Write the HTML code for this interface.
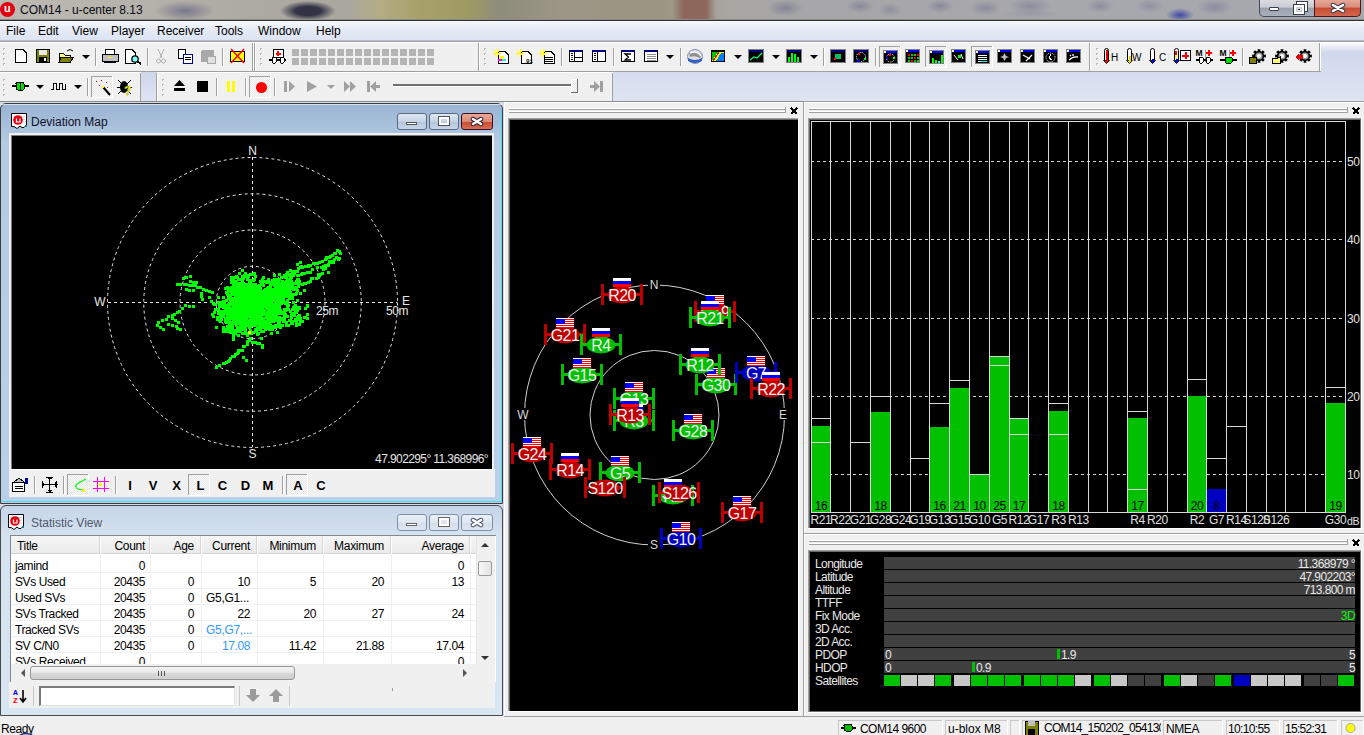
<!DOCTYPE html><html><head><meta charset="utf-8"><style>
*{margin:0;padding:0;box-sizing:border-box}
html,body{width:1364px;height:735px;overflow:hidden;background:#f0f0f0;font-family:"Liberation Sans",sans-serif;}
.ab{position:absolute}
.t{position:absolute;white-space:nowrap;line-height:1}
</style></head><body>
<div class="ab" style="left:0;top:0;width:1364px;height:735px;overflow:hidden">

<div class="ab" style="left:0px;top:0px;width:1364px;height:20px;background:radial-gradient(ellipse 18px 8px at 785px 8px,rgba(95,100,135,0.5),rgba(95,100,135,0)),radial-gradient(ellipse 14px 7px at 860px 6px,rgba(95,100,135,0.45),rgba(95,100,135,0)),radial-gradient(ellipse 12px 7px at 890px 10px,rgba(95,100,135,0.35),rgba(95,100,135,0)),radial-gradient(ellipse 14px 7px at 940px 6px,rgba(95,100,135,0.45),rgba(95,100,135,0)),radial-gradient(ellipse 16px 8px at 985px 8px,rgba(95,100,135,0.4),rgba(95,100,135,0)),radial-gradient(ellipse 22px 8px at 1030px 6px,rgba(95,100,135,0.4),rgba(95,100,135,0)),radial-gradient(ellipse 14px 7px at 1100px 6px,rgba(95,100,135,0.4),rgba(95,100,135,0)),radial-gradient(ellipse 14px 7px at 1150px 6px,rgba(95,100,135,0.35),rgba(95,100,135,0)),radial-gradient(ellipse 18px 8px at 1215px 7px,rgba(95,100,135,0.4),rgba(95,100,135,0)),radial-gradient(ellipse 30px 5px at 1030px 14px,rgba(95,100,135,0.2),rgba(95,100,135,0)),radial-gradient(ellipse 30px 10px at 185px 11px,rgba(100,100,130,.75),rgba(100,100,130,0)),radial-gradient(ellipse 28px 10px at 308px 11px,rgba(50,52,70,1) 45%,rgba(50,52,70,0)),linear-gradient(90deg,rgba(140,100,88,0) 672px,rgba(140,100,88,.95) 684px,rgba(140,100,88,.95) 706px,rgba(140,100,88,0) 716px),radial-gradient(ellipse 14px 7px at 1180px 15px,rgba(40,50,160,.8),rgba(40,50,160,0)),linear-gradient(90deg,#bcbab2 0px,#b4b2aa 140px,#aca9a1 270px,#aaa89e 350px,#b4ac84 380px,#a8a068 420px,#9e9a64 470px,#8e8c7c 500px,#9c9686 560px,#9a9682 660px,#a8a6a2 730px,#a6a6a8 800px,#a8a8ac 1000px,#a6a8ae 1264px)"></div>
<div class="ab" style="left:0px;top:19px;width:1364px;height:1px;background:#8a8a8a"></div>
<div class="ab" style="left:0px;top:20px;width:1364px;height:1px;background:#303030"></div>
<div class="ab" style="left:0px;top:2px;width:15px;height:15px;background:#e00010;border-radius:50%"></div>
<div class="t" style="left:4px;top:3px;font-size:11px;color:#fff;font-weight:bold">u</div>
<div class="t" style="left:20px;top:4px;font-size:12px;color:#0a0a14;">COM14 - u-center 8.13</div>
<div class="ab" style="left:1259px;top:0px;width:29px;height:17px;background:linear-gradient(#d9dbe0,#c8ccd4 45%,#9aa0ac 50%,#aab0bc);border:1px solid #444a58;border-top:none;border-radius:0 0 0 5px"></div>
<div class="ab" style="left:1278px;top:0px;width:0px;height:0px;"></div>
<div class="ab" style="left:1287px;top:0px;width:28px;height:17px;background:linear-gradient(#d9dbe0,#c8ccd4 45%,#9aa0ac 50%,#aab0bc);border:1px solid #444a58;border-top:none;border-left:none"></div>
<div class="ab" style="left:1314px;top:0px;width:47px;height:17px;background:linear-gradient(#e8a898,#d88a78 45%,#c84a30 50%,#d46850);border:1px solid #4a1a1a;border-top:none;border-radius:0 0 5px 0"></div>
<div class="ab" style="left:1269px;top:7px;width:10px;height:4px;background:#fff;border:1px solid #3a4050;border-radius:1px"></div>
<div class="ab" style="left:1297px;top:2px;width:10px;height:9px;border:2px solid #fff;outline:1px solid #3a4050"></div>
<div class="ab" style="left:1294px;top:5px;width:10px;height:9px;background:#cfd2da;border:2px solid #fff;outline:1px solid #3a4050"></div>
<div class="ab" style="left:1298px;top:9px;width:2px;height:1px;background:#3a4050"></div>
<svg class="ab" style="left:1330px;top:2px" width="16" height="12"><path d="M3 3 L13 9 M13 3 L3 9" stroke="#3a4050" stroke-width="4.5" stroke-linecap="round"/><path d="M3 3 L13 9 M13 3 L3 9" stroke="#fff" stroke-width="2.6" stroke-linecap="round"/></svg>
<div class="ab" style="left:0px;top:21px;width:1364px;height:20px;background:linear-gradient(#f6f8fc,#e6ebf6 40%,#dbe2f2)"></div>
<div class="ab" style="left:0px;top:40px;width:1364px;height:1px;background:#b9bdc8"></div>
<div class="t" style="left:6px;top:25px;font-size:12px;color:#000;">File</div>
<div class="t" style="left:38px;top:25px;font-size:12px;color:#000;">Edit</div>
<div class="t" style="left:72px;top:25px;font-size:12px;color:#000;">View</div>
<div class="t" style="left:111px;top:25px;font-size:12px;color:#000;">Player</div>
<div class="t" style="left:157px;top:25px;font-size:12px;color:#000;">Receiver</div>
<div class="t" style="left:215px;top:25px;font-size:12px;color:#000;">Tools</div>
<div class="t" style="left:258px;top:25px;font-size:12px;color:#000;">Window</div>
<div class="t" style="left:316px;top:25px;font-size:12px;color:#000;">Help</div>
<div class="ab" style="left:0px;top:41px;width:1364px;height:61px;background:#d3daea"></div>
<div class="ab" style="left:0px;top:41px;width:1364px;height:1px;background:#a0a0a0"></div>
<div class="ab" style="left:0px;top:42px;width:1320px;height:30px;background:#f0f0f0"></div>
<div class="ab" style="left:0px;top:71px;width:1364px;height:1px;background:#a5a5a5"></div>
<div class="ab" style="left:0px;top:72px;width:612px;height:29px;background:#f0f0f0"></div>
<div class="ab" style="left:0px;top:100px;width:1364px;height:2px;background:#9a9a9a"></div>
<svg class="ab" style="left:0;top:41px" width="1364" height="62" viewBox="0 41 1364 62" shape-rendering="crispEdges">
<defs><linearGradient id="mdi" x1="0" y1="0" x2="0" y2="1"><stop offset="0" stop-color="#cfd6ea"/><stop offset="1" stop-color="#dfe4f3"/></linearGradient><pattern id="dith" width="2" height="2" patternUnits="userSpaceOnUse"><rect width="2" height="2" fill="#fafafa"/><rect width="1" height="1" fill="#e8e8e8"/><rect x="1" y="1" width="1" height="1" fill="#e8e8e8"/></pattern></defs>
<rect x="0" y="41" width="1364" height="61" fill="url(#mdi)"/>
<rect x="0" y="41" width="1364" height="1" fill="#a0a0a0"/>
<defs><linearGradient id="wb" x1="0" y1="0" x2="0" y2="1"><stop offset="0" stop-color="#ffffff"/><stop offset="1" stop-color="#d3d9eb"/></linearGradient></defs><rect x="1320" y="42" width="44" height="10" fill="url(#wb)"/>
<rect x="0" y="42" width="1321" height="29" fill="#f0f0f0"/><rect x="0" y="42" width="1321" height="1" fill="#fff"/>
<rect x="0" y="71" width="1321" height="1" fill="#a0a0a0"/>
<rect x="0" y="72" width="141" height="29" fill="#f0f0f0"/><rect x="157" y="72" width="456" height="29" fill="#f0f0f0"/>
<rect x="0" y="72" width="141" height="1" fill="#fff"/><rect x="157" y="72" width="456" height="1" fill="#fff"/>
<rect x="141" y="72" width="16" height="29" fill="url(#mdi)"/>
<rect x="140" y="73" width="1" height="28" fill="#a0a0a0"/><rect x="156" y="73" width="1" height="28" fill="#a0a0a0"/><rect x="157" y="73" width="1" height="28" fill="#fff"/>
<rect x="612" y="73" width="1" height="28" fill="#a0a0a0"/>
<rect x="0" y="101" width="1364" height="1" fill="#8a8a8a"/>
<rect x="252" y="43" width="1" height="28" fill="#a0a0a0"/><rect x="253" y="43" width="1" height="28" fill="#fff"/>
<rect x="254" y="43" width="1" height="28" fill="#a0a0a0"/><rect x="255" y="43" width="1" height="28" fill="#fff"/>
<rect x="478" y="43" width="1" height="28" fill="#a0a0a0"/><rect x="479" y="43" width="1" height="28" fill="#fff"/>
<rect x="1089" y="43" width="1" height="28" fill="#a0a0a0"/><rect x="1090" y="43" width="1" height="28" fill="#fff"/>
<rect x="1319" y="43" width="1" height="28" fill="#a0a0a0"/><rect x="1320" y="43" width="1" height="28" fill="#fff"/>
<rect x="3" y="48" width="2" height="2" fill="#b8b8b8"/><rect x="4" y="49" width="1" height="1" fill="#fff"/>
<rect x="3" y="53" width="2" height="2" fill="#b8b8b8"/><rect x="4" y="54" width="1" height="1" fill="#fff"/>
<rect x="3" y="58" width="2" height="2" fill="#b8b8b8"/><rect x="4" y="59" width="1" height="1" fill="#fff"/>
<rect x="3" y="63" width="2" height="2" fill="#b8b8b8"/><rect x="4" y="64" width="1" height="1" fill="#fff"/>
<path d="M15.5 49.5 H23 L26.5 53 V62.5 H15.5 Z" fill="#fff" stroke="#000"/>
<rect x="36" y="49" width="14" height="14" fill="#000"/><rect x="37" y="50" width="12" height="12" fill="#808000"/><rect x="39" y="50" width="8" height="5" fill="#e8e8e8"/><rect x="39" y="57" width="8" height="5" fill="#000"/><rect x="44" y="58" width="2" height="3" fill="#fff"/>
<path d="M59 53 H63 L65 55 H70 V62 H59 Z" fill="#ffff80" stroke="#000" stroke-width="1"/><path d="M61 57 H74 L70 62 H59 Z" fill="#808000" stroke="#000"/><path d="M67 51 Q70 48 73 51" stroke="#000" fill="none" shape-rendering="auto"/>
<path d="M82 55 H90 L86 59 Z" fill="#000" shape-rendering="auto"/>
<rect x="95" y="48" width="1" height="18" fill="#a0a0a0"/><rect x="96" y="48" width="1" height="18" fill="#fff"/>
<rect x="105" y="49" width="9" height="5" fill="#fff" stroke="#000"/><rect x="102" y="54" width="16" height="7" fill="#c0c0c0" stroke="#000"/><rect x="104" y="61" width="12" height="2" fill="#000"/><rect x="108" y="57" width="4" height="1" fill="#ff0"/>
<path d="M125.5 49.5 H132 L135.5 53 V63.5 H125.5 Z" fill="#fff" stroke="#000"/><circle cx="135" cy="59" r="3.2" fill="#80ffff" stroke="#000" stroke-width="1.3" shape-rendering="auto"/><path d="M137 61 L141 64" stroke="#000" stroke-width="2"/>
<rect x="147" y="48" width="1" height="18" fill="#a0a0a0"/><rect x="148" y="48" width="1" height="18" fill="#fff"/>
<path d="M158 49 L162 58 M164 49 L160 58" stroke="#b0b0b0" fill="none" shape-rendering="auto"/><circle cx="158.5" cy="61" r="2" fill="none" stroke="#b0b0b0" shape-rendering="auto"/><circle cx="163.5" cy="61" r="2" fill="none" stroke="#b0b0b0" shape-rendering="auto"/>
<rect x="178.5" y="49.5" width="7" height="9" fill="#fff" stroke="#000"/><rect x="183.5" y="54.5" width="9" height="9" fill="#fff" stroke="#000080"/><rect x="185" y="57" width="6" height="1" fill="#000"/><rect x="185" y="59" width="6" height="1" fill="#000"/>
<rect x="201" y="50" width="13" height="12" rx="2" fill="#a8a8a8"/><rect x="207" y="56" width="8" height="7" fill="#e0e0e0" stroke="#a8a8a8"/>
<rect x="222" y="48" width="1" height="18" fill="#a0a0a0"/><rect x="223" y="48" width="1" height="18" fill="#fff"/>
<rect x="230" y="51" width="14" height="10" fill="#ffff00" stroke="#000"/><path d="M231 49 L244 63 M244 49 L231 63" stroke="#ff0000" stroke-width="1.5" shape-rendering="auto"/>
<rect x="260" y="48" width="2" height="2" fill="#b8b8b8"/><rect x="261" y="49" width="1" height="1" fill="#fff"/>
<rect x="260" y="53" width="2" height="2" fill="#b8b8b8"/><rect x="261" y="54" width="1" height="1" fill="#fff"/>
<rect x="260" y="58" width="2" height="2" fill="#b8b8b8"/><rect x="261" y="59" width="1" height="1" fill="#fff"/>
<rect x="260" y="63" width="2" height="2" fill="#b8b8b8"/><rect x="261" y="64" width="1" height="1" fill="#fff"/>
<rect x="273.5" y="49.5" width="10" height="8" fill="#fff" stroke="#000"/><path d="M278 51 V56 M275.5 53.5 H280.5" stroke="#f00" stroke-width="2"/>
<rect x="269" y="59" width="17" height="2" fill="#000"/><rect x="272" y="57" width="4" height="6" rx="1" fill="#fff" stroke="#000"/><rect x="280" y="57" width="4" height="6" rx="1" fill="#fff" stroke="#000"/>
<rect x="292" y="49" width="7" height="7" fill="#b4b4b4"/>
<rect x="301" y="49" width="7" height="7" fill="#b4b4b4"/>
<rect x="310" y="49" width="7" height="7" fill="#b4b4b4"/>
<rect x="319" y="49" width="7" height="7" fill="#b4b4b4"/>
<rect x="328" y="49" width="7" height="7" fill="#b4b4b4"/>
<rect x="337" y="49" width="7" height="7" fill="#b4b4b4"/>
<rect x="346" y="49" width="7" height="7" fill="#b4b4b4"/>
<rect x="355" y="49" width="7" height="7" fill="#b4b4b4"/>
<rect x="364" y="49" width="7" height="7" fill="#b4b4b4"/>
<rect x="373" y="49" width="7" height="7" fill="#b4b4b4"/>
<rect x="382" y="49" width="7" height="7" fill="#b4b4b4"/>
<rect x="391" y="49" width="7" height="7" fill="#b4b4b4"/>
<rect x="400" y="49" width="7" height="7" fill="#b4b4b4"/>
<rect x="409" y="49" width="7" height="7" fill="#b4b4b4"/>
<rect x="418" y="49" width="7" height="7" fill="#b4b4b4"/>
<rect x="427" y="49" width="7" height="7" fill="#b4b4b4"/>
<rect x="292" y="58" width="7" height="7" fill="#b4b4b4"/>
<rect x="301" y="58" width="7" height="7" fill="#b4b4b4"/>
<rect x="310" y="58" width="7" height="7" fill="#b4b4b4"/>
<rect x="319" y="58" width="7" height="7" fill="#b4b4b4"/>
<rect x="328" y="58" width="7" height="7" fill="#b4b4b4"/>
<rect x="337" y="58" width="7" height="7" fill="#b4b4b4"/>
<rect x="346" y="58" width="7" height="7" fill="#b4b4b4"/>
<rect x="355" y="58" width="7" height="7" fill="#b4b4b4"/>
<rect x="364" y="58" width="7" height="7" fill="#b4b4b4"/>
<rect x="373" y="58" width="7" height="7" fill="#b4b4b4"/>
<rect x="382" y="58" width="7" height="7" fill="#b4b4b4"/>
<rect x="391" y="58" width="7" height="7" fill="#b4b4b4"/>
<rect x="400" y="58" width="7" height="7" fill="#b4b4b4"/>
<rect x="409" y="58" width="7" height="7" fill="#b4b4b4"/>
<rect x="418" y="58" width="7" height="7" fill="#b4b4b4"/>
<rect x="427" y="58" width="7" height="7" fill="#b4b4b4"/>
<rect x="484" y="48" width="2" height="2" fill="#b8b8b8"/><rect x="485" y="49" width="1" height="1" fill="#fff"/>
<rect x="484" y="53" width="2" height="2" fill="#b8b8b8"/><rect x="485" y="54" width="1" height="1" fill="#fff"/>
<rect x="484" y="58" width="2" height="2" fill="#b8b8b8"/><rect x="485" y="59" width="1" height="1" fill="#fff"/>
<rect x="484" y="63" width="2" height="2" fill="#b8b8b8"/><rect x="485" y="64" width="1" height="1" fill="#fff"/>
<path d="M498.5 51.5 H505 L508.5 55 V63.5 H498.5 Z" fill="#fff" stroke="#000"/>
<path d="M494 50 L500 56 M500 50 L494 56 M497 49 V57 M493 53 H501" stroke="#ffff00" stroke-width="1"/>
<path d="M521.5 51.5 H528 L531.5 55 V63.5 H521.5 Z" fill="#fff" stroke="#000"/>
<path d="M517 50 L523 56 M523 50 L517 56 M520 49 V57 M516 53 H524" stroke="#ffff00" stroke-width="1"/>
<path d="M544.5 51.5 H551 L554.5 55 V63.5 H544.5 Z" fill="#fff" stroke="#000"/>
<path d="M540 50 L546 56 M546 50 L540 56 M543 49 V57 M539 53 H547" stroke="#ffff00" stroke-width="1"/>
<rect x="500" y="56" width="4" height="3" fill="#ff0"/><rect x="498" y="59" width="4" height="2" fill="#f0f"/><rect x="502" y="59" width="4" height="2" fill="#0ff"/>
<text x="526" y="63" style="font:bold 6px Liberation Mono" fill="#000">01</text>
<rect x="545" y="57" width="8" height="1" fill="#000"/><rect x="545" y="59" width="8" height="1" fill="#000"/><rect x="545" y="61" width="8" height="1" fill="#000"/>
<rect x="561" y="48" width="1" height="18" fill="#a0a0a0"/><rect x="562" y="48" width="1" height="18" fill="#fff"/>
<rect x="569.5" y="50.5" width="13" height="11" fill="#fff" stroke="#000"/><rect x="569" y="50" width="14" height="2" fill="#000080"/><rect x="574" y="52" width="1" height="10" fill="#000"/><rect x="571" y="53" width="2" height="1" fill="#000"/><rect x="571" y="55" width="2" height="1" fill="#000"/><rect x="571" y="57" width="2" height="1" fill="#606060"/><rect x="571" y="59" width="2" height="1" fill="#000"/>
<rect x="592.5" y="50.5" width="13" height="11" fill="#fff" stroke="#000"/><rect x="592" y="50" width="14" height="2" fill="#000080"/><rect x="597" y="52" width="1" height="10" fill="#000"/><rect x="594" y="53" width="2" height="1" fill="#000"/><rect x="594" y="55" width="2" height="1" fill="#000"/><rect x="594" y="57" width="2" height="1" fill="#606060"/><rect x="594" y="59" width="2" height="1" fill="#000"/>
<rect x="574" y="57" width="9" height="1" fill="#000"/>
<rect x="613" y="48" width="1" height="18" fill="#a0a0a0"/><rect x="614" y="48" width="1" height="18" fill="#fff"/>
<rect x="621.5" y="50.5" width="13" height="11" fill="#fff" stroke="#000"/><rect x="621" y="50" width="14" height="2" fill="#000080"/><path d="M631 54 H625 L628.5 57 L625 60 H631" stroke="#000" stroke-width="1.3" fill="none" shape-rendering="auto"/>
<rect x="644.5" y="50.5" width="13" height="11" fill="#fff" stroke="#000"/><rect x="644" y="50" width="14" height="2" fill="#000080"/>
<rect x="647" y="54" width="9" height="1" fill="#909090"/>
<rect x="647" y="56" width="9" height="1" fill="#909090"/>
<rect x="647" y="58" width="9" height="1" fill="#909090"/>
<rect x="647" y="60" width="9" height="1" fill="#909090"/>
<path d="M666 55 H674 L670 59 Z" fill="#000" shape-rendering="auto"/>
<rect x="680" y="48" width="1" height="18" fill="#a0a0a0"/><rect x="681" y="48" width="1" height="18" fill="#fff"/>
<ellipse cx="695" cy="56.5" rx="7.5" ry="7" fill="#e0e0e0" stroke="#8090c0" stroke-width="1" shape-rendering="auto"/><path d="M689 53 Q696 49 702 55 L700 58 Q694 55 690 57 Z" fill="#909090" shape-rendering="auto"/><path d="M688 58 Q695 62 702 58 L702 61 Q695 65 688 61 Z" fill="#3060c0" shape-rendering="auto"/><path d="M690 53 Q697 50 701 56" stroke="#fff" stroke-width="1.5" fill="none" shape-rendering="auto"/>
<rect x="711" y="50" width="14" height="12" fill="#000"/><rect x="712" y="52" width="12" height="9" fill="#00c000"/><path d="M712 61 L718 52 H724 V61 Z" fill="#ffff00"/><path d="M716 61 L721 53 H724 V61 Z" fill="#0080ff"/><path d="M713 61 L719 52" stroke="#f00"/>
<path d="M734 55 H742 L738 59 Z" fill="#000" shape-rendering="auto"/>
<rect x="748" y="49" width="16" height="14" fill="#808080"/><rect x="749" y="50" width="14" height="12" fill="#000"/><rect x="749" y="50" width="14" height="2" fill="#000080"/><path d="M750 60 L754 57 L757 58 L762 53" stroke="#00ff80" stroke-width="1.2" fill="none" shape-rendering="auto"/>
<path d="M772 55 H780 L776 59 Z" fill="#000" shape-rendering="auto"/>
<rect x="786" y="49" width="16" height="14" fill="#808080"/><rect x="787" y="50" width="14" height="12" fill="#000"/><rect x="787" y="50" width="14" height="2" fill="#000080"/><rect x="788" y="57" width="2" height="5" fill="#0f0"/><rect x="791" y="53" width="2" height="9" fill="#0f0"/><rect x="794" y="54" width="2" height="8" fill="#0f0"/><rect x="797" y="57" width="2" height="5" fill="#0f0"/>
<path d="M810 55 H818 L814 59 Z" fill="#000" shape-rendering="auto"/>
<rect x="823" y="48" width="1" height="18" fill="#a0a0a0"/><rect x="824" y="48" width="1" height="18" fill="#fff"/>
<rect x="830" y="49" width="16" height="14" fill="#808080"/><rect x="831" y="50" width="14" height="12" fill="#000"/><rect x="831" y="50" width="14" height="2" fill="#000080"/><rect x="835" y="54" width="6" height="5" fill="#00c060"/><rect x="834" y="58" width="2" height="2" fill="#f00"/>
<rect x="853" y="49" width="16" height="14" fill="#808080"/><rect x="854" y="50" width="14" height="12" fill="#000"/><rect x="854" y="50" width="14" height="2" fill="#000080"/><circle cx="861" cy="57" r="4.5" fill="none" stroke="#fff" stroke-dasharray="1 1" shape-rendering="auto"/><rect x="858" y="53" width="2" height="2" fill="#f00"/><rect x="864" y="58" width="2" height="2" fill="#0f0"/><rect x="857" y="60" width="3" height="2" fill="#00f"/>
<rect x="875" y="48" width="1" height="18" fill="#a0a0a0"/><rect x="876" y="48" width="1" height="18" fill="#fff"/>
<rect x="879" y="46" width="22" height="22" fill="url(#dith)"/>
<rect x="879" y="46" width="22" height="1" fill="#a0a0a0"/><rect x="879" y="46" width="1" height="22" fill="#a0a0a0"/>
<rect x="879" y="67" width="22" height="1" fill="#fff"/><rect x="900" y="46" width="1" height="22" fill="#fff"/>
<rect x="925" y="46" width="22" height="22" fill="url(#dith)"/>
<rect x="925" y="46" width="22" height="1" fill="#a0a0a0"/><rect x="925" y="46" width="1" height="22" fill="#a0a0a0"/>
<rect x="925" y="67" width="22" height="1" fill="#fff"/><rect x="946" y="46" width="1" height="22" fill="#fff"/>
<rect x="971" y="46" width="22" height="22" fill="url(#dith)"/>
<rect x="971" y="46" width="22" height="1" fill="#a0a0a0"/><rect x="971" y="46" width="1" height="22" fill="#a0a0a0"/>
<rect x="971" y="67" width="22" height="1" fill="#fff"/><rect x="992" y="46" width="1" height="22" fill="#fff"/>
<rect x="883" y="50" width="15" height="14" fill="#808080"/><rect x="884" y="51" width="13" height="12" fill="#000"/><rect x="884" y="51" width="13" height="2" fill="#0000ff"/><rect x="884" y="51" width="2" height="2" fill="#fff"/>
<rect x="905" y="49" width="15" height="14" fill="#808080"/><rect x="906" y="50" width="13" height="12" fill="#000"/><rect x="906" y="50" width="13" height="2" fill="#0000ff"/><rect x="906" y="50" width="2" height="2" fill="#fff"/>
<rect x="929" y="50" width="15" height="14" fill="#808080"/><rect x="930" y="51" width="13" height="12" fill="#000"/><rect x="930" y="51" width="13" height="2" fill="#0000ff"/><rect x="930" y="51" width="2" height="2" fill="#fff"/>
<rect x="951" y="49" width="15" height="14" fill="#808080"/><rect x="952" y="50" width="13" height="12" fill="#000"/><rect x="952" y="50" width="13" height="2" fill="#0000ff"/><rect x="952" y="50" width="2" height="2" fill="#fff"/>
<rect x="975" y="50" width="15" height="14" fill="#808080"/><rect x="976" y="51" width="13" height="12" fill="#000"/><rect x="976" y="51" width="13" height="2" fill="#0000ff"/><rect x="976" y="51" width="2" height="2" fill="#fff"/>
<rect x="997" y="49" width="15" height="14" fill="#808080"/><rect x="998" y="50" width="13" height="12" fill="#000"/><rect x="998" y="50" width="13" height="2" fill="#0000ff"/><rect x="998" y="50" width="2" height="2" fill="#fff"/>
<rect x="1020" y="49" width="15" height="14" fill="#808080"/><rect x="1021" y="50" width="13" height="12" fill="#000"/><rect x="1021" y="50" width="13" height="2" fill="#0000ff"/><rect x="1021" y="50" width="2" height="2" fill="#fff"/>
<rect x="1043" y="49" width="15" height="14" fill="#808080"/><rect x="1044" y="50" width="13" height="12" fill="#000"/><rect x="1044" y="50" width="13" height="2" fill="#0000ff"/><rect x="1044" y="50" width="2" height="2" fill="#fff"/>
<rect x="1066" y="49" width="15" height="14" fill="#808080"/><rect x="1067" y="50" width="13" height="12" fill="#000"/><rect x="1067" y="50" width="13" height="2" fill="#0000ff"/><rect x="1067" y="50" width="2" height="2" fill="#fff"/>
<circle cx="890.5" cy="58" r="4" fill="none" stroke="#fff" stroke-dasharray="1 1" shape-rendering="auto"/><rect x="889" y="54" width="2" height="2" fill="#f00"/><rect x="893" y="57" width="2" height="2" fill="#0f0"/><rect x="886" y="57" width="2" height="2" fill="#00f"/>
<rect x="908" y="54" width="2" height="2" fill="#f00"/>
<rect x="911" y="54" width="2" height="2" fill="#0c0"/>
<rect x="914" y="54" width="2" height="2" fill="#0c0"/>
<rect x="917" y="54" width="2" height="2" fill="#f00"/>
<rect x="908" y="57" width="2" height="2" fill="#0c0"/>
<rect x="911" y="57" width="2" height="2" fill="#0c0"/>
<rect x="914" y="57" width="2" height="2" fill="#f00"/>
<rect x="917" y="57" width="2" height="2" fill="#0c0"/>
<rect x="908" y="60" width="2" height="2" fill="#0c0"/>
<rect x="911" y="60" width="2" height="2" fill="#f00"/>
<rect x="914" y="60" width="2" height="2" fill="#0c0"/>
<rect x="917" y="60" width="2" height="2" fill="#0c0"/>
<rect x="932" y="58" width="2" height="5" fill="#0f0"/><rect x="935" y="60" width="2" height="3" fill="#0f0"/><rect x="938" y="61" width="2" height="2" fill="#0ff"/><rect x="941" y="55" width="2" height="8" fill="#0f0"/>
<path d="M954 55 L958 60 M961 54 L963 59" stroke="#fff" shape-rendering="auto"/><rect x="958" y="55" width="3" height="3" fill="#0f0"/>
<rect x="978" y="55" width="9" height="1" fill="#fff"/>
<rect x="978" y="57" width="9" height="1" fill="#fff"/>
<rect x="978" y="59" width="9" height="1" fill="#fff"/>
<rect x="978" y="61" width="9" height="1" fill="#fff"/>
<rect x="981" y="61" width="6" height="1" fill="#0ff"/>
<path d="M1004.5 53 L1006 56 L1009 57 L1006 58 L1004.5 61 L1003 58 L1000 57 L1003 56 Z" fill="#c0c0c0" shape-rendering="auto"/>
<path d="M1023 55 L1030 59 M1026 61 L1032 55" stroke="#fff" stroke-width="1.3" shape-rendering="auto"/>
<circle cx="1050.5" cy="57.5" r="4.5" fill="none" stroke="#fff" stroke-dasharray="1 1" shape-rendering="auto"/><path d="M1051 54 L1049 58 L1052 60" stroke="#fff" fill="none"/>
<path d="M1069 60 Q1073 56 1078 57 M1073 54 V56 M1070 55 L1071 56" stroke="#fff" stroke-width="1.3" fill="none" shape-rendering="auto"/>
<rect x="1096" y="48" width="2" height="2" fill="#b8b8b8"/><rect x="1097" y="49" width="1" height="1" fill="#fff"/>
<rect x="1096" y="53" width="2" height="2" fill="#b8b8b8"/><rect x="1097" y="54" width="1" height="1" fill="#fff"/>
<rect x="1096" y="58" width="2" height="2" fill="#b8b8b8"/><rect x="1097" y="59" width="1" height="1" fill="#fff"/>
<rect x="1096" y="63" width="2" height="2" fill="#b8b8b8"/><rect x="1097" y="64" width="1" height="1" fill="#fff"/>
<path d="M1104.5 60 V50.5 Q1104.5 48.5 1106.5 48.5 Q1108.5 48.5 1108.5 50.5 V60" fill="#fff" stroke="#000" shape-rendering="auto"/><path d="M1103.5 60.5 L1106.5 63.5 L1109.5 60.5 Z" fill="#e00000" stroke="#000" stroke-width="0.8" shape-rendering="auto"/>
<rect x="1105.5" y="50" width="2" height="11" fill="#e00000"/>
<text x="1111" y="61" style="font:10px Liberation Sans" fill="#000">H</text>
<path d="M1127.5 60 V50.5 Q1127.5 48.5 1129.5 48.5 Q1131.5 48.5 1131.5 50.5 V60" fill="#fff" stroke="#000" shape-rendering="auto"/><path d="M1126.5 60.5 L1129.5 63.5 L1132.5 60.5 Z" fill="#e0e000" stroke="#000" stroke-width="0.8" shape-rendering="auto"/>
<rect x="1128.5" y="56" width="2" height="5" fill="#e0e000"/>
<text x="1132" y="61" style="font:10px Liberation Sans;letter-spacing:-1px" fill="#000">W</text>
<path d="M1150.5 60 V50.5 Q1150.5 48.5 1152.5 48.5 Q1154.5 48.5 1154.5 50.5 V60" fill="#fff" stroke="#000" shape-rendering="auto"/><path d="M1149.5 60.5 L1152.5 63.5 L1155.5 60.5 Z" fill="#0000e0" stroke="#000" stroke-width="0.8" shape-rendering="auto"/>
<rect x="1151.5" y="59" width="2" height="2" fill="#0000e0"/>
<text x="1159" y="61" style="font:10px Liberation Sans" fill="#000">C</text>
<path d="M1174.5 60 V50.5 Q1174.5 48.5 1176.5 48.5 Q1178.5 48.5 1178.5 50.5 V60" fill="#fff" stroke="#000" shape-rendering="auto"/><path d="M1173.5 60.5 L1176.5 63.5 L1179.5 60.5 Z" fill="#0000e0" stroke="#000" stroke-width="0.8" shape-rendering="auto"/>
<rect x="1175.5" y="59" width="2" height="2" fill="#0000e0"/>
<rect x="1175" y="51" width="2" height="4" fill="#f00"/><rect x="1175" y="55" width="2" height="4" fill="#ff0"/>
<rect x="1180.5" y="50.5" width="10" height="10" fill="#fff" stroke="#000"/><path d="M1185.5 52 V59 M1182 55.5 H1189" stroke="#f00" stroke-width="2"/>
<text x="1195.5" y="56" style="font:bold 8.5px Liberation Sans" fill="#000">M</text><rect x="1205" y="50" width="1" height="12" fill="#a0a0a0"/><path d="M1209 50 V56 M1206 53 H1212" stroke="#f00" stroke-width="2"/>
<rect x="1196" y="59" width="17" height="2" fill="#000"/><rect x="1199" y="57" width="4" height="6" rx="1" fill="#fff" stroke="#000"/><rect x="1206" y="57" width="4" height="6" rx="1" fill="#fff" stroke="#000"/>
<text x="1219.5" y="56" style="font:bold 8.5px Liberation Sans" fill="#000">M</text><rect x="1229" y="50" width="1" height="12" fill="#a0a0a0"/><path d="M1233 50 V56 M1230 53 H1236" stroke="#f00" stroke-width="2"/>
<rect x="1220" y="59" width="17" height="2" fill="#000"/><rect x="1225" y="57" width="7" height="6" rx="1" fill="#00e000" stroke="#000"/>
<rect x="1242" y="48" width="1" height="18" fill="#a0a0a0"/><rect x="1243" y="48" width="1" height="18" fill="#fff"/>
<g transform="translate(1259,56)" shape-rendering="auto"><path d="M6.85 -1.46 L6.85 1.46 L5.08 1.13 L4.39 2.79 L5.87 3.81 L3.81 5.87 L2.79 4.39 L1.13 5.08 L1.46 6.85 L-1.46 6.85 L-1.13 5.08 L-2.79 4.39 L-3.81 5.87 L-5.87 3.81 L-4.39 2.79 L-5.08 1.13 L-6.85 1.46 L-6.85 -1.46 L-5.08 -1.13 L-4.39 -2.79 L-5.87 -3.81 L-3.81 -5.87 L-2.79 -4.39 L-1.13 -5.08 L-1.46 -6.85 L1.46 -6.85 L1.13 -5.08 L2.79 -4.39 L3.81 -5.87 L5.87 -3.81 L4.39 -2.79 L5.08 -1.13 Z" fill="#000"/><circle r="3.6" fill="#a0a0a0"/><circle r="2" fill="#fff"/></g>
<rect x="1249" y="57" width="7" height="6" fill="#808000" stroke="#000"/>
<g transform="translate(1282,56)" shape-rendering="auto"><path d="M6.85 -1.46 L6.85 1.46 L5.08 1.13 L4.39 2.79 L5.87 3.81 L3.81 5.87 L2.79 4.39 L1.13 5.08 L1.46 6.85 L-1.46 6.85 L-1.13 5.08 L-2.79 4.39 L-3.81 5.87 L-5.87 3.81 L-4.39 2.79 L-5.08 1.13 L-6.85 1.46 L-6.85 -1.46 L-5.08 -1.13 L-4.39 -2.79 L-5.87 -3.81 L-3.81 -5.87 L-2.79 -4.39 L-1.13 -5.08 L-1.46 -6.85 L1.46 -6.85 L1.13 -5.08 L2.79 -4.39 L3.81 -5.87 L5.87 -3.81 L4.39 -2.79 L5.08 -1.13 Z" fill="#000"/><circle r="3.6" fill="#a0a0a0"/><circle r="2" fill="#fff"/></g>
<path d="M1272 58 H1278 L1280 57 V63 H1272 Z" fill="#ffff80" stroke="#000"/>
<g transform="translate(1305,56)" shape-rendering="auto"><path d="M6.85 -1.46 L6.85 1.46 L5.08 1.13 L4.39 2.79 L5.87 3.81 L3.81 5.87 L2.79 4.39 L1.13 5.08 L1.46 6.85 L-1.46 6.85 L-1.13 5.08 L-2.79 4.39 L-3.81 5.87 L-5.87 3.81 L-4.39 2.79 L-5.08 1.13 L-6.85 1.46 L-6.85 -1.46 L-5.08 -1.13 L-4.39 -2.79 L-5.87 -3.81 L-3.81 -5.87 L-2.79 -4.39 L-1.13 -5.08 L-1.46 -6.85 L1.46 -6.85 L1.13 -5.08 L2.79 -4.39 L3.81 -5.87 L5.87 -3.81 L4.39 -2.79 L5.08 -1.13 Z" fill="#000"/><circle r="3.6" fill="#a0a0a0"/><circle r="2" fill="#fff"/></g>
<path d="M1295 57 L1299 53 V55 H1303 V59 H1299 V61 Z" fill="#e00000"/>
<rect x="3" y="79" width="2" height="2" fill="#b8b8b8"/><rect x="4" y="80" width="1" height="1" fill="#fff"/>
<rect x="3" y="84" width="2" height="2" fill="#b8b8b8"/><rect x="4" y="85" width="1" height="1" fill="#fff"/>
<rect x="3" y="89" width="2" height="2" fill="#b8b8b8"/><rect x="4" y="90" width="1" height="1" fill="#fff"/>
<rect x="3" y="94" width="2" height="2" fill="#b8b8b8"/><rect x="4" y="95" width="1" height="1" fill="#fff"/>
<rect x="12" y="85" width="17" height="2" fill="#000"/><rect x="16" y="82" width="8" height="8" rx="1.5" fill="#00e000" stroke="#000"/><rect x="19.5" y="82" width="1" height="8" fill="#000"/>
<path d="M36 85 H44 L40 89 Z" fill="#000" shape-rendering="auto"/>
<path d="M50.5 89.5 H53.5 V83.5 H56.5 V89.5 H59.5 V83.5 H62.5 V89.5 H65.5 V83.5" stroke="#000" stroke-width="1.2" fill="none"/>
<path d="M74 85 H82 L78 89 Z" fill="#000" shape-rendering="auto"/>
<rect x="87" y="78" width="1" height="18" fill="#a0a0a0"/><rect x="88" y="78" width="1" height="18" fill="#fff"/>
<rect x="91" y="76" width="22" height="22" fill="url(#dith)"/>
<rect x="91" y="76" width="22" height="1" fill="#a0a0a0"/><rect x="91" y="76" width="1" height="22" fill="#a0a0a0"/>
<rect x="91" y="97" width="22" height="1" fill="#fff"/><rect x="112" y="76" width="1" height="22" fill="#fff"/>
<path d="M103 87 L110 95" stroke="#000" stroke-width="2" shape-rendering="auto"/><path d="M102.5 86.5 L104 88" stroke="#ff0" stroke-width="2"/>
<rect x="96" y="81" width="1" height="1" fill="#c00000"/>
<rect x="101" y="80" width="1" height="1" fill="#c00000"/>
<rect x="106" y="82" width="1" height="1" fill="#c00000"/>
<rect x="99" y="85" width="1" height="1" fill="#c00000"/>
<rect x="107" y="87" width="1" height="1" fill="#c00000"/>
<ellipse cx="124" cy="87" rx="4" ry="6" fill="#000" shape-rendering="auto"/><path d="M118 80 L131 94 M131 80 L118 94 M117 87 H132" stroke="#000" stroke-width="1"/><text x="124" y="95" style="font:bold 12px Liberation Sans" fill="#ffff00" stroke="#808000" stroke-width="0.3">?</text>
<rect x="162" y="79" width="2" height="2" fill="#b8b8b8"/><rect x="163" y="80" width="1" height="1" fill="#fff"/>
<rect x="162" y="84" width="2" height="2" fill="#b8b8b8"/><rect x="163" y="85" width="1" height="1" fill="#fff"/>
<rect x="162" y="89" width="2" height="2" fill="#b8b8b8"/><rect x="163" y="90" width="1" height="1" fill="#fff"/>
<rect x="162" y="94" width="2" height="2" fill="#b8b8b8"/><rect x="163" y="95" width="1" height="1" fill="#fff"/>
<path d="M174 86 L179.5 80 L185 86 Z" fill="#000" shape-rendering="auto"/><rect x="174" y="88" width="11" height="3" fill="#000"/>
<rect x="197" y="81" width="11" height="11" fill="#000"/>
<rect x="216" y="78" width="1" height="18" fill="#a0a0a0"/><rect x="217" y="78" width="1" height="18" fill="#fff"/>
<rect x="227" y="81" width="3" height="11" fill="#ffff00"/><rect x="232" y="81" width="3" height="11" fill="#ffff00"/>
<rect x="245" y="78" width="1" height="18" fill="#a0a0a0"/><rect x="246" y="78" width="1" height="18" fill="#fff"/>
<rect x="249" y="76" width="22" height="22" fill="url(#dith)"/>
<rect x="249" y="76" width="22" height="1" fill="#a0a0a0"/><rect x="249" y="76" width="1" height="22" fill="#a0a0a0"/>
<rect x="249" y="97" width="22" height="1" fill="#fff"/><rect x="270" y="76" width="1" height="22" fill="#fff"/>
<circle cx="261.5" cy="87.5" r="5.5" fill="#ff0000" shape-rendering="auto"/>
<rect x="274" y="78" width="1" height="18" fill="#a0a0a0"/><rect x="275" y="78" width="1" height="18" fill="#fff"/>
<rect x="284" y="81" width="3" height="11" fill="#a0a0a0"/><path d="M289 81 L295 86.5 L289 92 Z" fill="#a0a0a0" shape-rendering="auto"/>
<path d="M307 81 L317 86.5 L307 92 Z" fill="#a0a0a0" shape-rendering="auto"/>
<path d="M327 85 H335 L331 89 Z" fill="#a0a0a0" shape-rendering="auto"/>
<path d="M344 81 L350 86.5 L344 92 Z M350 81 L356 86.5 L350 92 Z" fill="#a0a0a0" shape-rendering="auto"/>
<rect x="367" y="81" width="3" height="11" fill="#a0a0a0"/><path d="M376 81 L370 86.5 L376 92 Z" fill="#a0a0a0" shape-rendering="auto"/><rect x="375" y="85" width="5" height="3" fill="#a0a0a0"/>
<rect x="393" y="84" width="180" height="2" fill="#707070"/><rect x="393" y="86" width="180" height="1" fill="#fff"/>
<rect x="571" y="79" width="7" height="14" fill="url(#dith)"/><rect x="571" y="79" width="7" height="1" fill="#fff"/><rect x="571" y="79" width="1" height="14" fill="#fff"/><rect x="577" y="79" width="1" height="14" fill="#707070"/><rect x="571" y="92" width="7" height="1" fill="#707070"/>
<rect x="600" y="81" width="3" height="11" fill="#a0a0a0"/><path d="M594 81 L600 86.5 L594 92 Z" fill="#a0a0a0" shape-rendering="auto"/><rect x="590" y="85" width="5" height="3" fill="#a0a0a0"/>
</svg>
<div class="ab" style="left:0px;top:102px;width:504px;height:614px;background:#d3daea"></div>
<div class="ab" style="left:0px;top:103px;width:503px;height:401px;background:linear-gradient(#99b4d2,#b5cbe3 40px,#bad0e8);border:1px solid #3c3c3c;border-radius:6px 6px 0 0"></div>
<div class="ab" style="left:1px;top:104px;width:501px;height:1px;background:#fff;opacity:.6"></div>
<svg class="ab" style="left:11px;top:113px" width="17" height="17"><path d="M0.5 0.5 H15.5 V12 L13 14.5 H11 L9 13 L6 15.5 L3 13.5 H0.5 Z" fill="#fff" stroke="#000"/><rect x="2" y="3" width="12" height="1" fill="#ddd"/><rect x="2" y="6" width="12" height="1" fill="#ddd"/><rect x="2" y="9" width="12" height="1" fill="#ddd"/><circle cx="7" cy="7" r="4.8" fill="#e80010"/><path d="M5.5 5.5 V9 H9 V5.5" stroke="#fff" stroke-width="1.2" fill="none"/><rect x="14" y="12" width="2" height="2" fill="#208080"/></svg>
<div class="t" style="left:31px;top:116px;font-size:12px;color:#10102a;">Deviation Map</div>
<div class="ab" style="left:397px;top:113px;width:30px;height:17px;background:linear-gradient(#dfe8f3,#c5d3e4 50%,#b3c4d9 51%,#c8d6e6);border:1px solid #5a6a80;border-radius:3px"></div>
<div class="ab" style="left:406px;top:122px;width:11px;height:3px;background:#fff;border:1px solid #555"></div>
<div class="ab" style="left:429px;top:113px;width:30px;height:17px;background:linear-gradient(#dfe8f3,#c5d3e4 50%,#b3c4d9 51%,#c8d6e6);border:1px solid #5a6a80;border-radius:3px"></div>
<div class="ab" style="left:439px;top:117px;width:10px;height:8px;border:2px solid #fff;outline:1px solid #555"></div>
<div class="ab" style="left:461px;top:113px;width:32px;height:17px;background:linear-gradient(#e9a898,#dc8a78 50%,#c84a30 51%,#d87058);border:1px solid #3a1020;border-radius:3px"></div>
<svg class="ab" style="left:470px;top:116px" width="14" height="11"><path d="M3 3 L11 8 M11 3 L3 8" stroke="#402030" stroke-width="4.5" stroke-linecap="round"/><path d="M3 3 L11 8 M11 3 L3 8" stroke="#fff" stroke-width="2.6" stroke-linecap="round"/></svg>
<div class="ab" style="left:1px;top:501px;width:501px;height:1px;background:#48d8f8"></div>
<div class="ab" style="left:501px;top:110px;width:1px;height:392px;background:#48d8f8"></div>
<div class="ab" style="left:9px;top:133px;width:485px;height:364px;background:#f0f0f0"></div>
<div class="ab" style="left:11px;top:135px;width:481px;height:334px;background:#000;border-top:1px solid #808080;border-left:1px solid #808080"></div>
<svg class="ab" style="left:11px;top:135px" width="481" height="334" viewBox="11 135 481 334" shape-rendering="crispEdges">
<rect x="11" y="135" width="481" height="334" fill="#000"/>
<rect x="11" y="135" width="481" height="1" fill="#7a7a7a"/><rect x="11" y="135" width="1" height="334" fill="#7a7a7a"/>
<circle cx="252.5" cy="302.5" r="36.25" fill="none" stroke="#e6e6e6" stroke-width="1" stroke-dasharray="3 3" shape-rendering="auto"/>
<circle cx="252.5" cy="302.5" r="72.5" fill="none" stroke="#e6e6e6" stroke-width="1" stroke-dasharray="3 3" shape-rendering="auto"/>
<circle cx="252.5" cy="302.5" r="108.75" fill="none" stroke="#e6e6e6" stroke-width="1" stroke-dasharray="3 3" shape-rendering="auto"/>
<circle cx="252.5" cy="302.5" r="145" fill="none" stroke="#e6e6e6" stroke-width="1" stroke-dasharray="3 3" shape-rendering="auto"/>
<line x1="108" y1="302.5" x2="397" y2="302.5" stroke="#e6e6e6" stroke-width="1" stroke-dasharray="3 3"/>
<line x1="252.5" y1="157" x2="252.5" y2="447" stroke="#e6e6e6" stroke-width="1" stroke-dasharray="3 3"/>
<g fill="#00ff00">
<rect x="291" y="270" width="3" height="3"/>
<rect x="296" y="270" width="3" height="3"/>
<rect x="293" y="271" width="3" height="3"/>
<rect x="292" y="272" width="3" height="3"/>
<rect x="293" y="272" width="3" height="3"/>
<rect x="243" y="274" width="3" height="3"/>
<rect x="246" y="274" width="3" height="3"/>
<rect x="287" y="274" width="3" height="3"/>
<rect x="289" y="274" width="3" height="3"/>
<rect x="292" y="274" width="3" height="3"/>
<rect x="296" y="274" width="3" height="3"/>
<rect x="297" y="274" width="3" height="3"/>
<rect x="241" y="275" width="3" height="3"/>
<rect x="245" y="275" width="3" height="3"/>
<rect x="247" y="275" width="3" height="3"/>
<rect x="285" y="275" width="3" height="3"/>
<rect x="290" y="275" width="3" height="3"/>
<rect x="232" y="276" width="3" height="3"/>
<rect x="234" y="276" width="3" height="3"/>
<rect x="242" y="276" width="3" height="3"/>
<rect x="289" y="276" width="3" height="3"/>
<rect x="242" y="277" width="3" height="3"/>
<rect x="231" y="278" width="3" height="3"/>
<rect x="238" y="278" width="3" height="3"/>
<rect x="241" y="278" width="3" height="3"/>
<rect x="246" y="278" width="3" height="3"/>
<rect x="253" y="278" width="3" height="3"/>
<rect x="273" y="278" width="3" height="3"/>
<rect x="276" y="278" width="3" height="3"/>
<rect x="278" y="278" width="3" height="3"/>
<rect x="296" y="278" width="3" height="3"/>
<rect x="297" y="278" width="3" height="3"/>
<rect x="252" y="279" width="3" height="3"/>
<rect x="271" y="279" width="3" height="3"/>
<rect x="286" y="279" width="3" height="3"/>
<rect x="297" y="279" width="3" height="3"/>
<rect x="234" y="280" width="3" height="3"/>
<rect x="248" y="280" width="3" height="3"/>
<rect x="271" y="280" width="3" height="3"/>
<rect x="276" y="280" width="3" height="3"/>
<rect x="281" y="280" width="3" height="3"/>
<rect x="295" y="280" width="3" height="3"/>
<rect x="296" y="280" width="3" height="3"/>
<rect x="298" y="280" width="3" height="3"/>
<rect x="230" y="281" width="3" height="3"/>
<rect x="241" y="281" width="3" height="3"/>
<rect x="265" y="281" width="3" height="3"/>
<rect x="267" y="281" width="3" height="3"/>
<rect x="268" y="281" width="3" height="3"/>
<rect x="275" y="281" width="3" height="3"/>
<rect x="277" y="281" width="3" height="3"/>
<rect x="282" y="281" width="3" height="3"/>
<rect x="235" y="282" width="3" height="3"/>
<rect x="236" y="282" width="3" height="3"/>
<rect x="238" y="282" width="3" height="3"/>
<rect x="242" y="282" width="3" height="3"/>
<rect x="248" y="282" width="3" height="3"/>
<rect x="261" y="282" width="3" height="3"/>
<rect x="269" y="282" width="3" height="3"/>
<rect x="276" y="282" width="3" height="3"/>
<rect x="278" y="282" width="3" height="3"/>
<rect x="294" y="282" width="3" height="3"/>
<rect x="295" y="282" width="3" height="3"/>
<rect x="298" y="282" width="3" height="3"/>
<rect x="232" y="283" width="3" height="3"/>
<rect x="233" y="283" width="3" height="3"/>
<rect x="237" y="283" width="3" height="3"/>
<rect x="239" y="283" width="3" height="3"/>
<rect x="241" y="283" width="3" height="3"/>
<rect x="245" y="283" width="3" height="3"/>
<rect x="246" y="283" width="3" height="3"/>
<rect x="252" y="283" width="3" height="3"/>
<rect x="254" y="283" width="3" height="3"/>
<rect x="260" y="283" width="3" height="3"/>
<rect x="272" y="283" width="3" height="3"/>
<rect x="274" y="283" width="3" height="3"/>
<rect x="278" y="283" width="3" height="3"/>
<rect x="279" y="283" width="3" height="3"/>
<rect x="281" y="283" width="3" height="3"/>
<rect x="285" y="283" width="3" height="3"/>
<rect x="287" y="283" width="3" height="3"/>
<rect x="291" y="283" width="3" height="3"/>
<rect x="239" y="284" width="3" height="3"/>
<rect x="244" y="284" width="3" height="3"/>
<rect x="247" y="284" width="3" height="3"/>
<rect x="248" y="284" width="3" height="3"/>
<rect x="258" y="284" width="3" height="3"/>
<rect x="262" y="284" width="3" height="3"/>
<rect x="269" y="284" width="3" height="3"/>
<rect x="280" y="284" width="3" height="3"/>
<rect x="283" y="284" width="3" height="3"/>
<rect x="285" y="284" width="3" height="3"/>
<rect x="237" y="285" width="3" height="3"/>
<rect x="239" y="285" width="3" height="3"/>
<rect x="250" y="285" width="3" height="3"/>
<rect x="256" y="285" width="3" height="3"/>
<rect x="274" y="285" width="3" height="3"/>
<rect x="275" y="285" width="3" height="3"/>
<rect x="284" y="285" width="3" height="3"/>
<rect x="230" y="286" width="3" height="3"/>
<rect x="238" y="286" width="3" height="3"/>
<rect x="253" y="286" width="3" height="3"/>
<rect x="267" y="286" width="3" height="3"/>
<rect x="268" y="286" width="3" height="3"/>
<rect x="277" y="286" width="3" height="3"/>
<rect x="289" y="286" width="3" height="3"/>
<rect x="292" y="286" width="3" height="3"/>
<rect x="295" y="286" width="3" height="3"/>
<rect x="236" y="287" width="3" height="3"/>
<rect x="237" y="287" width="3" height="3"/>
<rect x="238" y="287" width="3" height="3"/>
<rect x="244" y="287" width="3" height="3"/>
<rect x="248" y="287" width="3" height="3"/>
<rect x="255" y="287" width="3" height="3"/>
<rect x="259" y="287" width="3" height="3"/>
<rect x="274" y="287" width="3" height="3"/>
<rect x="278" y="287" width="3" height="3"/>
<rect x="280" y="287" width="3" height="3"/>
<rect x="286" y="287" width="3" height="3"/>
<rect x="289" y="287" width="3" height="3"/>
<rect x="292" y="287" width="3" height="3"/>
<rect x="227" y="288" width="3" height="3"/>
<rect x="232" y="288" width="3" height="3"/>
<rect x="237" y="288" width="3" height="3"/>
<rect x="245" y="288" width="3" height="3"/>
<rect x="246" y="288" width="3" height="3"/>
<rect x="267" y="288" width="3" height="3"/>
<rect x="270" y="288" width="3" height="3"/>
<rect x="275" y="288" width="3" height="3"/>
<rect x="283" y="288" width="3" height="3"/>
<rect x="294" y="288" width="3" height="3"/>
<rect x="295" y="288" width="3" height="3"/>
<rect x="241" y="289" width="3" height="3"/>
<rect x="247" y="289" width="3" height="3"/>
<rect x="249" y="289" width="3" height="3"/>
<rect x="252" y="289" width="3" height="3"/>
<rect x="266" y="289" width="3" height="3"/>
<rect x="281" y="289" width="3" height="3"/>
<rect x="282" y="289" width="3" height="3"/>
<rect x="233" y="290" width="3" height="3"/>
<rect x="236" y="290" width="3" height="3"/>
<rect x="237" y="290" width="3" height="3"/>
<rect x="241" y="290" width="3" height="3"/>
<rect x="243" y="290" width="3" height="3"/>
<rect x="249" y="290" width="3" height="3"/>
<rect x="250" y="290" width="3" height="3"/>
<rect x="252" y="290" width="3" height="3"/>
<rect x="253" y="290" width="3" height="3"/>
<rect x="258" y="290" width="3" height="3"/>
<rect x="261" y="290" width="3" height="3"/>
<rect x="265" y="290" width="3" height="3"/>
<rect x="275" y="290" width="3" height="3"/>
<rect x="277" y="290" width="3" height="3"/>
<rect x="231" y="291" width="3" height="3"/>
<rect x="239" y="291" width="3" height="3"/>
<rect x="242" y="291" width="3" height="3"/>
<rect x="246" y="291" width="3" height="3"/>
<rect x="254" y="291" width="3" height="3"/>
<rect x="255" y="291" width="3" height="3"/>
<rect x="259" y="291" width="3" height="3"/>
<rect x="266" y="291" width="3" height="3"/>
<rect x="269" y="291" width="3" height="3"/>
<rect x="272" y="291" width="3" height="3"/>
<rect x="277" y="291" width="3" height="3"/>
<rect x="279" y="291" width="3" height="3"/>
<rect x="281" y="291" width="3" height="3"/>
<rect x="230" y="292" width="3" height="3"/>
<rect x="247" y="292" width="3" height="3"/>
<rect x="251" y="292" width="3" height="3"/>
<rect x="257" y="292" width="3" height="3"/>
<rect x="261" y="292" width="3" height="3"/>
<rect x="263" y="292" width="3" height="3"/>
<rect x="278" y="292" width="3" height="3"/>
<rect x="282" y="292" width="3" height="3"/>
<rect x="230" y="293" width="3" height="3"/>
<rect x="234" y="293" width="3" height="3"/>
<rect x="237" y="293" width="3" height="3"/>
<rect x="248" y="293" width="3" height="3"/>
<rect x="261" y="293" width="3" height="3"/>
<rect x="265" y="293" width="3" height="3"/>
<rect x="266" y="293" width="3" height="3"/>
<rect x="268" y="293" width="3" height="3"/>
<rect x="274" y="293" width="3" height="3"/>
<rect x="283" y="293" width="3" height="3"/>
<rect x="287" y="293" width="3" height="3"/>
<rect x="289" y="293" width="3" height="3"/>
<rect x="291" y="293" width="3" height="3"/>
<rect x="293" y="293" width="3" height="3"/>
<rect x="238" y="294" width="3" height="3"/>
<rect x="263" y="294" width="3" height="3"/>
<rect x="268" y="294" width="3" height="3"/>
<rect x="271" y="294" width="3" height="3"/>
<rect x="272" y="294" width="3" height="3"/>
<rect x="278" y="294" width="3" height="3"/>
<rect x="280" y="294" width="3" height="3"/>
<rect x="281" y="294" width="3" height="3"/>
<rect x="229" y="295" width="3" height="3"/>
<rect x="234" y="295" width="3" height="3"/>
<rect x="242" y="295" width="3" height="3"/>
<rect x="244" y="295" width="3" height="3"/>
<rect x="248" y="295" width="3" height="3"/>
<rect x="255" y="295" width="3" height="3"/>
<rect x="259" y="295" width="3" height="3"/>
<rect x="263" y="295" width="3" height="3"/>
<rect x="266" y="295" width="3" height="3"/>
<rect x="271" y="295" width="3" height="3"/>
<rect x="277" y="295" width="3" height="3"/>
<rect x="234" y="296" width="3" height="3"/>
<rect x="235" y="296" width="3" height="3"/>
<rect x="238" y="296" width="3" height="3"/>
<rect x="239" y="296" width="3" height="3"/>
<rect x="243" y="296" width="3" height="3"/>
<rect x="257" y="296" width="3" height="3"/>
<rect x="281" y="296" width="3" height="3"/>
<rect x="227" y="297" width="3" height="3"/>
<rect x="231" y="297" width="3" height="3"/>
<rect x="237" y="297" width="3" height="3"/>
<rect x="238" y="297" width="3" height="3"/>
<rect x="243" y="297" width="3" height="3"/>
<rect x="244" y="297" width="3" height="3"/>
<rect x="253" y="297" width="3" height="3"/>
<rect x="257" y="297" width="3" height="3"/>
<rect x="268" y="297" width="3" height="3"/>
<rect x="271" y="297" width="3" height="3"/>
<rect x="272" y="297" width="3" height="3"/>
<rect x="288" y="297" width="3" height="3"/>
<rect x="291" y="297" width="3" height="3"/>
<rect x="232" y="298" width="3" height="3"/>
<rect x="240" y="298" width="3" height="3"/>
<rect x="244" y="298" width="3" height="3"/>
<rect x="263" y="298" width="3" height="3"/>
<rect x="265" y="298" width="3" height="3"/>
<rect x="268" y="298" width="3" height="3"/>
<rect x="273" y="298" width="3" height="3"/>
<rect x="277" y="298" width="3" height="3"/>
<rect x="225" y="299" width="3" height="3"/>
<rect x="241" y="299" width="3" height="3"/>
<rect x="256" y="299" width="3" height="3"/>
<rect x="269" y="299" width="3" height="3"/>
<rect x="286" y="299" width="3" height="3"/>
<rect x="222" y="300" width="3" height="3"/>
<rect x="236" y="300" width="3" height="3"/>
<rect x="237" y="300" width="3" height="3"/>
<rect x="247" y="300" width="3" height="3"/>
<rect x="252" y="300" width="3" height="3"/>
<rect x="259" y="300" width="3" height="3"/>
<rect x="262" y="300" width="3" height="3"/>
<rect x="268" y="300" width="3" height="3"/>
<rect x="277" y="300" width="3" height="3"/>
<rect x="220" y="301" width="3" height="3"/>
<rect x="230" y="301" width="3" height="3"/>
<rect x="231" y="301" width="3" height="3"/>
<rect x="233" y="301" width="3" height="3"/>
<rect x="242" y="301" width="3" height="3"/>
<rect x="243" y="301" width="3" height="3"/>
<rect x="248" y="301" width="3" height="3"/>
<rect x="252" y="301" width="3" height="3"/>
<rect x="258" y="301" width="3" height="3"/>
<rect x="278" y="301" width="3" height="3"/>
<rect x="283" y="301" width="3" height="3"/>
<rect x="228" y="302" width="3" height="3"/>
<rect x="230" y="302" width="3" height="3"/>
<rect x="240" y="302" width="3" height="3"/>
<rect x="241" y="302" width="3" height="3"/>
<rect x="252" y="302" width="3" height="3"/>
<rect x="275" y="302" width="3" height="3"/>
<rect x="279" y="302" width="3" height="3"/>
<rect x="280" y="302" width="3" height="3"/>
<rect x="242" y="303" width="3" height="3"/>
<rect x="243" y="303" width="3" height="3"/>
<rect x="256" y="303" width="3" height="3"/>
<rect x="263" y="303" width="3" height="3"/>
<rect x="267" y="303" width="3" height="3"/>
<rect x="278" y="303" width="3" height="3"/>
<rect x="232" y="304" width="3" height="3"/>
<rect x="245" y="304" width="3" height="3"/>
<rect x="259" y="304" width="3" height="3"/>
<rect x="261" y="304" width="3" height="3"/>
<rect x="218" y="305" width="3" height="3"/>
<rect x="219" y="305" width="3" height="3"/>
<rect x="223" y="305" width="3" height="3"/>
<rect x="234" y="305" width="3" height="3"/>
<rect x="235" y="305" width="3" height="3"/>
<rect x="238" y="305" width="3" height="3"/>
<rect x="244" y="305" width="3" height="3"/>
<rect x="272" y="305" width="3" height="3"/>
<rect x="222" y="306" width="3" height="3"/>
<rect x="224" y="306" width="3" height="3"/>
<rect x="244" y="306" width="3" height="3"/>
<rect x="249" y="306" width="3" height="3"/>
<rect x="270" y="306" width="3" height="3"/>
<rect x="271" y="306" width="3" height="3"/>
<rect x="276" y="306" width="3" height="3"/>
<rect x="278" y="306" width="3" height="3"/>
<rect x="230" y="307" width="3" height="3"/>
<rect x="246" y="307" width="3" height="3"/>
<rect x="217" y="308" width="3" height="3"/>
<rect x="235" y="308" width="3" height="3"/>
<rect x="239" y="308" width="3" height="3"/>
<rect x="248" y="308" width="3" height="3"/>
<rect x="254" y="308" width="3" height="3"/>
<rect x="276" y="308" width="3" height="3"/>
<rect x="246" y="309" width="3" height="3"/>
<rect x="259" y="309" width="3" height="3"/>
<rect x="279" y="309" width="3" height="3"/>
<rect x="218" y="310" width="3" height="3"/>
<rect x="219" y="310" width="3" height="3"/>
<rect x="227" y="310" width="3" height="3"/>
<rect x="230" y="310" width="3" height="3"/>
<rect x="248" y="310" width="3" height="3"/>
<rect x="262" y="310" width="3" height="3"/>
<rect x="276" y="310" width="3" height="3"/>
<rect x="232" y="311" width="3" height="3"/>
<rect x="244" y="311" width="3" height="3"/>
<rect x="247" y="311" width="3" height="3"/>
<rect x="248" y="311" width="3" height="3"/>
<rect x="268" y="311" width="3" height="3"/>
<rect x="274" y="311" width="3" height="3"/>
<rect x="279" y="311" width="3" height="3"/>
<rect x="217" y="312" width="3" height="3"/>
<rect x="218" y="312" width="3" height="3"/>
<rect x="220" y="312" width="3" height="3"/>
<rect x="223" y="312" width="3" height="3"/>
<rect x="226" y="312" width="3" height="3"/>
<rect x="228" y="312" width="3" height="3"/>
<rect x="236" y="312" width="3" height="3"/>
<rect x="259" y="312" width="3" height="3"/>
<rect x="278" y="312" width="3" height="3"/>
<rect x="279" y="312" width="3" height="3"/>
<rect x="231" y="313" width="3" height="3"/>
<rect x="240" y="313" width="3" height="3"/>
<rect x="242" y="313" width="3" height="3"/>
<rect x="267" y="313" width="3" height="3"/>
<rect x="268" y="313" width="3" height="3"/>
<rect x="270" y="313" width="3" height="3"/>
<rect x="243" y="314" width="3" height="3"/>
<rect x="244" y="314" width="3" height="3"/>
<rect x="249" y="314" width="3" height="3"/>
<rect x="253" y="314" width="3" height="3"/>
<rect x="259" y="314" width="3" height="3"/>
<rect x="268" y="314" width="3" height="3"/>
<rect x="274" y="314" width="3" height="3"/>
<rect x="219" y="315" width="3" height="3"/>
<rect x="222" y="315" width="3" height="3"/>
<rect x="234" y="315" width="3" height="3"/>
<rect x="237" y="315" width="3" height="3"/>
<rect x="238" y="315" width="3" height="3"/>
<rect x="242" y="315" width="3" height="3"/>
<rect x="248" y="315" width="3" height="3"/>
<rect x="251" y="315" width="3" height="3"/>
<rect x="260" y="315" width="3" height="3"/>
<rect x="216" y="316" width="3" height="3"/>
<rect x="220" y="316" width="3" height="3"/>
<rect x="231" y="316" width="3" height="3"/>
<rect x="258" y="316" width="3" height="3"/>
<rect x="272" y="316" width="3" height="3"/>
<rect x="278" y="316" width="3" height="3"/>
<rect x="234" y="317" width="3" height="3"/>
<rect x="235" y="317" width="3" height="3"/>
<rect x="237" y="317" width="3" height="3"/>
<rect x="243" y="317" width="3" height="3"/>
<rect x="244" y="317" width="3" height="3"/>
<rect x="245" y="317" width="3" height="3"/>
<rect x="249" y="317" width="3" height="3"/>
<rect x="259" y="317" width="3" height="3"/>
<rect x="278" y="317" width="3" height="3"/>
<rect x="216" y="318" width="3" height="3"/>
<rect x="220" y="318" width="3" height="3"/>
<rect x="224" y="318" width="3" height="3"/>
<rect x="228" y="318" width="3" height="3"/>
<rect x="269" y="318" width="3" height="3"/>
<rect x="270" y="318" width="3" height="3"/>
<rect x="281" y="318" width="3" height="3"/>
<rect x="218" y="319" width="3" height="3"/>
<rect x="232" y="319" width="3" height="3"/>
<rect x="233" y="319" width="3" height="3"/>
<rect x="235" y="319" width="3" height="3"/>
<rect x="248" y="319" width="3" height="3"/>
<rect x="249" y="319" width="3" height="3"/>
<rect x="252" y="319" width="3" height="3"/>
<rect x="257" y="319" width="3" height="3"/>
<rect x="267" y="319" width="3" height="3"/>
<rect x="275" y="319" width="3" height="3"/>
<rect x="219" y="320" width="3" height="3"/>
<rect x="224" y="320" width="3" height="3"/>
<rect x="235" y="320" width="3" height="3"/>
<rect x="237" y="320" width="3" height="3"/>
<rect x="243" y="320" width="3" height="3"/>
<rect x="261" y="320" width="3" height="3"/>
<rect x="268" y="320" width="3" height="3"/>
<rect x="269" y="320" width="3" height="3"/>
<rect x="272" y="320" width="3" height="3"/>
<rect x="226" y="321" width="3" height="3"/>
<rect x="230" y="321" width="3" height="3"/>
<rect x="240" y="321" width="3" height="3"/>
<rect x="254" y="321" width="3" height="3"/>
<rect x="267" y="321" width="3" height="3"/>
<rect x="268" y="321" width="3" height="3"/>
<rect x="278" y="321" width="3" height="3"/>
<rect x="229" y="322" width="3" height="3"/>
<rect x="232" y="322" width="3" height="3"/>
<rect x="234" y="322" width="3" height="3"/>
<rect x="238" y="322" width="3" height="3"/>
<rect x="246" y="322" width="3" height="3"/>
<rect x="248" y="322" width="3" height="3"/>
<rect x="250" y="322" width="3" height="3"/>
<rect x="262" y="322" width="3" height="3"/>
<rect x="277" y="322" width="3" height="3"/>
<rect x="228" y="323" width="3" height="3"/>
<rect x="229" y="323" width="3" height="3"/>
<rect x="231" y="323" width="3" height="3"/>
<rect x="258" y="323" width="3" height="3"/>
<rect x="230" y="324" width="3" height="3"/>
<rect x="231" y="324" width="3" height="3"/>
<rect x="260" y="324" width="3" height="3"/>
<rect x="266" y="324" width="3" height="3"/>
<rect x="269" y="324" width="3" height="3"/>
<rect x="274" y="324" width="3" height="3"/>
<rect x="226" y="325" width="3" height="3"/>
<rect x="231" y="325" width="3" height="3"/>
<rect x="240" y="325" width="3" height="3"/>
<rect x="241" y="325" width="3" height="3"/>
<rect x="242" y="325" width="3" height="3"/>
<rect x="244" y="325" width="3" height="3"/>
<rect x="258" y="325" width="3" height="3"/>
<rect x="262" y="325" width="3" height="3"/>
<rect x="226" y="326" width="3" height="3"/>
<rect x="237" y="326" width="3" height="3"/>
<rect x="248" y="326" width="3" height="3"/>
<rect x="256" y="326" width="3" height="3"/>
<rect x="259" y="326" width="3" height="3"/>
<rect x="262" y="326" width="3" height="3"/>
<rect x="269" y="326" width="3" height="3"/>
<rect x="227" y="327" width="3" height="3"/>
<rect x="230" y="327" width="3" height="3"/>
<rect x="231" y="327" width="3" height="3"/>
<rect x="243" y="327" width="3" height="3"/>
<rect x="256" y="327" width="3" height="3"/>
<rect x="265" y="327" width="3" height="3"/>
<rect x="266" y="327" width="3" height="3"/>
<rect x="225" y="328" width="3" height="3"/>
<rect x="228" y="328" width="3" height="3"/>
<rect x="231" y="328" width="3" height="3"/>
<rect x="242" y="328" width="3" height="3"/>
<rect x="244" y="328" width="3" height="3"/>
<rect x="254" y="328" width="3" height="3"/>
<rect x="258" y="328" width="3" height="3"/>
<rect x="259" y="328" width="3" height="3"/>
<rect x="268" y="328" width="3" height="3"/>
<rect x="222" y="329" width="3" height="3"/>
<rect x="232" y="329" width="3" height="3"/>
<rect x="239" y="329" width="3" height="3"/>
<rect x="249" y="329" width="3" height="3"/>
<rect x="254" y="329" width="3" height="3"/>
<rect x="222" y="330" width="3" height="3"/>
<rect x="225" y="330" width="3" height="3"/>
<rect x="228" y="330" width="3" height="3"/>
<rect x="234" y="330" width="3" height="3"/>
<rect x="235" y="330" width="3" height="3"/>
<rect x="238" y="330" width="3" height="3"/>
<rect x="255" y="330" width="3" height="3"/>
<rect x="260" y="330" width="3" height="3"/>
<rect x="262" y="330" width="3" height="3"/>
<rect x="229" y="331" width="3" height="3"/>
<rect x="231" y="331" width="3" height="3"/>
<rect x="232" y="331" width="3" height="3"/>
<rect x="244" y="331" width="3" height="3"/>
<rect x="252" y="331" width="3" height="3"/>
<rect x="233" y="332" width="3" height="3"/>
<rect x="234" y="332" width="3" height="3"/>
<rect x="241" y="332" width="3" height="3"/>
<rect x="242" y="332" width="3" height="3"/>
<rect x="247" y="332" width="3" height="3"/>
<rect x="250" y="332" width="3" height="3"/>
<rect x="290" y="276" width="3" height="3"/>
<rect x="287" y="278" width="3" height="3"/>
<rect x="289" y="279" width="3" height="3"/>
<rect x="285" y="280" width="3" height="3"/>
<rect x="290" y="280" width="3" height="3"/>
<rect x="283" y="281" width="3" height="3"/>
<rect x="281" y="282" width="3" height="3"/>
<rect x="282" y="282" width="3" height="3"/>
<rect x="284" y="282" width="3" height="3"/>
<rect x="288" y="282" width="3" height="3"/>
<rect x="289" y="282" width="3" height="3"/>
<rect x="235" y="283" width="3" height="3"/>
<rect x="238" y="283" width="3" height="3"/>
<rect x="242" y="283" width="3" height="3"/>
<rect x="243" y="283" width="3" height="3"/>
<rect x="249" y="283" width="3" height="3"/>
<rect x="251" y="283" width="3" height="3"/>
<rect x="253" y="283" width="3" height="3"/>
<rect x="283" y="283" width="3" height="3"/>
<rect x="290" y="283" width="3" height="3"/>
<rect x="235" y="284" width="3" height="3"/>
<rect x="237" y="284" width="3" height="3"/>
<rect x="241" y="284" width="3" height="3"/>
<rect x="243" y="284" width="3" height="3"/>
<rect x="246" y="284" width="3" height="3"/>
<rect x="251" y="284" width="3" height="3"/>
<rect x="253" y="284" width="3" height="3"/>
<rect x="275" y="284" width="3" height="3"/>
<rect x="276" y="284" width="3" height="3"/>
<rect x="278" y="284" width="3" height="3"/>
<rect x="279" y="284" width="3" height="3"/>
<rect x="288" y="284" width="3" height="3"/>
<rect x="235" y="285" width="3" height="3"/>
<rect x="240" y="285" width="3" height="3"/>
<rect x="242" y="285" width="3" height="3"/>
<rect x="246" y="285" width="3" height="3"/>
<rect x="252" y="285" width="3" height="3"/>
<rect x="278" y="285" width="3" height="3"/>
<rect x="279" y="285" width="3" height="3"/>
<rect x="281" y="285" width="3" height="3"/>
<rect x="287" y="285" width="3" height="3"/>
<rect x="288" y="285" width="3" height="3"/>
<rect x="243" y="286" width="3" height="3"/>
<rect x="247" y="286" width="3" height="3"/>
<rect x="248" y="286" width="3" height="3"/>
<rect x="249" y="286" width="3" height="3"/>
<rect x="250" y="286" width="3" height="3"/>
<rect x="251" y="286" width="3" height="3"/>
<rect x="258" y="286" width="3" height="3"/>
<rect x="269" y="286" width="3" height="3"/>
<rect x="275" y="286" width="3" height="3"/>
<rect x="278" y="286" width="3" height="3"/>
<rect x="280" y="286" width="3" height="3"/>
<rect x="283" y="286" width="3" height="3"/>
<rect x="235" y="287" width="3" height="3"/>
<rect x="239" y="287" width="3" height="3"/>
<rect x="240" y="287" width="3" height="3"/>
<rect x="242" y="287" width="3" height="3"/>
<rect x="246" y="287" width="3" height="3"/>
<rect x="252" y="287" width="3" height="3"/>
<rect x="256" y="287" width="3" height="3"/>
<rect x="258" y="287" width="3" height="3"/>
<rect x="266" y="287" width="3" height="3"/>
<rect x="267" y="287" width="3" height="3"/>
<rect x="277" y="287" width="3" height="3"/>
<rect x="284" y="287" width="3" height="3"/>
<rect x="235" y="288" width="3" height="3"/>
<rect x="247" y="288" width="3" height="3"/>
<rect x="248" y="288" width="3" height="3"/>
<rect x="249" y="288" width="3" height="3"/>
<rect x="251" y="288" width="3" height="3"/>
<rect x="254" y="288" width="3" height="3"/>
<rect x="257" y="288" width="3" height="3"/>
<rect x="264" y="288" width="3" height="3"/>
<rect x="269" y="288" width="3" height="3"/>
<rect x="271" y="288" width="3" height="3"/>
<rect x="276" y="288" width="3" height="3"/>
<rect x="280" y="288" width="3" height="3"/>
<rect x="281" y="288" width="3" height="3"/>
<rect x="282" y="288" width="3" height="3"/>
<rect x="286" y="288" width="3" height="3"/>
<rect x="235" y="289" width="3" height="3"/>
<rect x="236" y="289" width="3" height="3"/>
<rect x="238" y="289" width="3" height="3"/>
<rect x="239" y="289" width="3" height="3"/>
<rect x="242" y="289" width="3" height="3"/>
<rect x="243" y="289" width="3" height="3"/>
<rect x="245" y="289" width="3" height="3"/>
<rect x="253" y="289" width="3" height="3"/>
<rect x="254" y="289" width="3" height="3"/>
<rect x="259" y="289" width="3" height="3"/>
<rect x="263" y="289" width="3" height="3"/>
<rect x="264" y="289" width="3" height="3"/>
<rect x="271" y="289" width="3" height="3"/>
<rect x="274" y="289" width="3" height="3"/>
<rect x="277" y="289" width="3" height="3"/>
<rect x="278" y="289" width="3" height="3"/>
<rect x="284" y="289" width="3" height="3"/>
<rect x="285" y="289" width="3" height="3"/>
<rect x="286" y="289" width="3" height="3"/>
<rect x="288" y="289" width="3" height="3"/>
<rect x="238" y="290" width="3" height="3"/>
<rect x="239" y="290" width="3" height="3"/>
<rect x="244" y="290" width="3" height="3"/>
<rect x="254" y="290" width="3" height="3"/>
<rect x="256" y="290" width="3" height="3"/>
<rect x="268" y="290" width="3" height="3"/>
<rect x="269" y="290" width="3" height="3"/>
<rect x="270" y="290" width="3" height="3"/>
<rect x="273" y="290" width="3" height="3"/>
<rect x="278" y="290" width="3" height="3"/>
<rect x="282" y="290" width="3" height="3"/>
<rect x="288" y="290" width="3" height="3"/>
<rect x="234" y="291" width="3" height="3"/>
<rect x="235" y="291" width="3" height="3"/>
<rect x="238" y="291" width="3" height="3"/>
<rect x="243" y="291" width="3" height="3"/>
<rect x="247" y="291" width="3" height="3"/>
<rect x="250" y="291" width="3" height="3"/>
<rect x="251" y="291" width="3" height="3"/>
<rect x="252" y="291" width="3" height="3"/>
<rect x="263" y="291" width="3" height="3"/>
<rect x="270" y="291" width="3" height="3"/>
<rect x="271" y="291" width="3" height="3"/>
<rect x="274" y="291" width="3" height="3"/>
<rect x="278" y="291" width="3" height="3"/>
<rect x="280" y="291" width="3" height="3"/>
<rect x="286" y="291" width="3" height="3"/>
<rect x="289" y="291" width="3" height="3"/>
<rect x="233" y="292" width="3" height="3"/>
<rect x="237" y="292" width="3" height="3"/>
<rect x="241" y="292" width="3" height="3"/>
<rect x="242" y="292" width="3" height="3"/>
<rect x="244" y="292" width="3" height="3"/>
<rect x="245" y="292" width="3" height="3"/>
<rect x="246" y="292" width="3" height="3"/>
<rect x="250" y="292" width="3" height="3"/>
<rect x="253" y="292" width="3" height="3"/>
<rect x="255" y="292" width="3" height="3"/>
<rect x="258" y="292" width="3" height="3"/>
<rect x="259" y="292" width="3" height="3"/>
<rect x="262" y="292" width="3" height="3"/>
<rect x="264" y="292" width="3" height="3"/>
<rect x="265" y="292" width="3" height="3"/>
<rect x="266" y="292" width="3" height="3"/>
<rect x="267" y="292" width="3" height="3"/>
<rect x="274" y="292" width="3" height="3"/>
<rect x="283" y="292" width="3" height="3"/>
<rect x="284" y="292" width="3" height="3"/>
<rect x="287" y="292" width="3" height="3"/>
<rect x="233" y="293" width="3" height="3"/>
<rect x="235" y="293" width="3" height="3"/>
<rect x="236" y="293" width="3" height="3"/>
<rect x="239" y="293" width="3" height="3"/>
<rect x="240" y="293" width="3" height="3"/>
<rect x="241" y="293" width="3" height="3"/>
<rect x="245" y="293" width="3" height="3"/>
<rect x="246" y="293" width="3" height="3"/>
<rect x="249" y="293" width="3" height="3"/>
<rect x="252" y="293" width="3" height="3"/>
<rect x="254" y="293" width="3" height="3"/>
<rect x="264" y="293" width="3" height="3"/>
<rect x="269" y="293" width="3" height="3"/>
<rect x="271" y="293" width="3" height="3"/>
<rect x="276" y="293" width="3" height="3"/>
<rect x="278" y="293" width="3" height="3"/>
<rect x="281" y="293" width="3" height="3"/>
<rect x="236" y="294" width="3" height="3"/>
<rect x="240" y="294" width="3" height="3"/>
<rect x="241" y="294" width="3" height="3"/>
<rect x="245" y="294" width="3" height="3"/>
<rect x="246" y="294" width="3" height="3"/>
<rect x="248" y="294" width="3" height="3"/>
<rect x="249" y="294" width="3" height="3"/>
<rect x="254" y="294" width="3" height="3"/>
<rect x="256" y="294" width="3" height="3"/>
<rect x="257" y="294" width="3" height="3"/>
<rect x="259" y="294" width="3" height="3"/>
<rect x="260" y="294" width="3" height="3"/>
<rect x="262" y="294" width="3" height="3"/>
<rect x="264" y="294" width="3" height="3"/>
<rect x="273" y="294" width="3" height="3"/>
<rect x="274" y="294" width="3" height="3"/>
<rect x="275" y="294" width="3" height="3"/>
<rect x="279" y="294" width="3" height="3"/>
<rect x="236" y="295" width="3" height="3"/>
<rect x="237" y="295" width="3" height="3"/>
<rect x="243" y="295" width="3" height="3"/>
<rect x="252" y="295" width="3" height="3"/>
<rect x="254" y="295" width="3" height="3"/>
<rect x="256" y="295" width="3" height="3"/>
<rect x="257" y="295" width="3" height="3"/>
<rect x="258" y="295" width="3" height="3"/>
<rect x="261" y="295" width="3" height="3"/>
<rect x="262" y="295" width="3" height="3"/>
<rect x="267" y="295" width="3" height="3"/>
<rect x="270" y="295" width="3" height="3"/>
<rect x="278" y="295" width="3" height="3"/>
<rect x="279" y="295" width="3" height="3"/>
<rect x="282" y="295" width="3" height="3"/>
<rect x="284" y="295" width="3" height="3"/>
<rect x="285" y="295" width="3" height="3"/>
<rect x="236" y="296" width="3" height="3"/>
<rect x="244" y="296" width="3" height="3"/>
<rect x="248" y="296" width="3" height="3"/>
<rect x="251" y="296" width="3" height="3"/>
<rect x="255" y="296" width="3" height="3"/>
<rect x="258" y="296" width="3" height="3"/>
<rect x="263" y="296" width="3" height="3"/>
<rect x="264" y="296" width="3" height="3"/>
<rect x="265" y="296" width="3" height="3"/>
<rect x="268" y="296" width="3" height="3"/>
<rect x="269" y="296" width="3" height="3"/>
<rect x="274" y="296" width="3" height="3"/>
<rect x="275" y="296" width="3" height="3"/>
<rect x="276" y="296" width="3" height="3"/>
<rect x="277" y="296" width="3" height="3"/>
<rect x="278" y="296" width="3" height="3"/>
<rect x="232" y="297" width="3" height="3"/>
<rect x="233" y="297" width="3" height="3"/>
<rect x="245" y="297" width="3" height="3"/>
<rect x="246" y="297" width="3" height="3"/>
<rect x="249" y="297" width="3" height="3"/>
<rect x="250" y="297" width="3" height="3"/>
<rect x="251" y="297" width="3" height="3"/>
<rect x="258" y="297" width="3" height="3"/>
<rect x="260" y="297" width="3" height="3"/>
<rect x="264" y="297" width="3" height="3"/>
<rect x="266" y="297" width="3" height="3"/>
<rect x="275" y="297" width="3" height="3"/>
<rect x="280" y="297" width="3" height="3"/>
<rect x="281" y="297" width="3" height="3"/>
<rect x="282" y="297" width="3" height="3"/>
<rect x="229" y="298" width="3" height="3"/>
<rect x="230" y="298" width="3" height="3"/>
<rect x="233" y="298" width="3" height="3"/>
<rect x="234" y="298" width="3" height="3"/>
<rect x="238" y="298" width="3" height="3"/>
<rect x="245" y="298" width="3" height="3"/>
<rect x="250" y="298" width="3" height="3"/>
<rect x="252" y="298" width="3" height="3"/>
<rect x="254" y="298" width="3" height="3"/>
<rect x="259" y="298" width="3" height="3"/>
<rect x="264" y="298" width="3" height="3"/>
<rect x="266" y="298" width="3" height="3"/>
<rect x="267" y="298" width="3" height="3"/>
<rect x="271" y="298" width="3" height="3"/>
<rect x="278" y="298" width="3" height="3"/>
<rect x="280" y="298" width="3" height="3"/>
<rect x="282" y="298" width="3" height="3"/>
<rect x="229" y="299" width="3" height="3"/>
<rect x="235" y="299" width="3" height="3"/>
<rect x="237" y="299" width="3" height="3"/>
<rect x="239" y="299" width="3" height="3"/>
<rect x="251" y="299" width="3" height="3"/>
<rect x="254" y="299" width="3" height="3"/>
<rect x="257" y="299" width="3" height="3"/>
<rect x="264" y="299" width="3" height="3"/>
<rect x="265" y="299" width="3" height="3"/>
<rect x="267" y="299" width="3" height="3"/>
<rect x="268" y="299" width="3" height="3"/>
<rect x="272" y="299" width="3" height="3"/>
<rect x="275" y="299" width="3" height="3"/>
<rect x="281" y="299" width="3" height="3"/>
<rect x="231" y="300" width="3" height="3"/>
<rect x="235" y="300" width="3" height="3"/>
<rect x="241" y="300" width="3" height="3"/>
<rect x="243" y="300" width="3" height="3"/>
<rect x="248" y="300" width="3" height="3"/>
<rect x="250" y="300" width="3" height="3"/>
<rect x="255" y="300" width="3" height="3"/>
<rect x="257" y="300" width="3" height="3"/>
<rect x="258" y="300" width="3" height="3"/>
<rect x="265" y="300" width="3" height="3"/>
<rect x="267" y="300" width="3" height="3"/>
<rect x="270" y="300" width="3" height="3"/>
<rect x="275" y="300" width="3" height="3"/>
<rect x="276" y="300" width="3" height="3"/>
<rect x="278" y="300" width="3" height="3"/>
<rect x="279" y="300" width="3" height="3"/>
<rect x="280" y="300" width="3" height="3"/>
<rect x="238" y="301" width="3" height="3"/>
<rect x="240" y="301" width="3" height="3"/>
<rect x="241" y="301" width="3" height="3"/>
<rect x="245" y="301" width="3" height="3"/>
<rect x="249" y="301" width="3" height="3"/>
<rect x="253" y="301" width="3" height="3"/>
<rect x="265" y="301" width="3" height="3"/>
<rect x="266" y="301" width="3" height="3"/>
<rect x="267" y="301" width="3" height="3"/>
<rect x="268" y="301" width="3" height="3"/>
<rect x="275" y="301" width="3" height="3"/>
<rect x="229" y="302" width="3" height="3"/>
<rect x="239" y="302" width="3" height="3"/>
<rect x="243" y="302" width="3" height="3"/>
<rect x="244" y="302" width="3" height="3"/>
<rect x="248" y="302" width="3" height="3"/>
<rect x="250" y="302" width="3" height="3"/>
<rect x="255" y="302" width="3" height="3"/>
<rect x="256" y="302" width="3" height="3"/>
<rect x="257" y="302" width="3" height="3"/>
<rect x="259" y="302" width="3" height="3"/>
<rect x="260" y="302" width="3" height="3"/>
<rect x="265" y="302" width="3" height="3"/>
<rect x="267" y="302" width="3" height="3"/>
<rect x="270" y="302" width="3" height="3"/>
<rect x="274" y="302" width="3" height="3"/>
<rect x="277" y="302" width="3" height="3"/>
<rect x="227" y="303" width="3" height="3"/>
<rect x="228" y="303" width="3" height="3"/>
<rect x="231" y="303" width="3" height="3"/>
<rect x="232" y="303" width="3" height="3"/>
<rect x="233" y="303" width="3" height="3"/>
<rect x="236" y="303" width="3" height="3"/>
<rect x="237" y="303" width="3" height="3"/>
<rect x="238" y="303" width="3" height="3"/>
<rect x="241" y="303" width="3" height="3"/>
<rect x="251" y="303" width="3" height="3"/>
<rect x="252" y="303" width="3" height="3"/>
<rect x="253" y="303" width="3" height="3"/>
<rect x="258" y="303" width="3" height="3"/>
<rect x="259" y="303" width="3" height="3"/>
<rect x="260" y="303" width="3" height="3"/>
<rect x="262" y="303" width="3" height="3"/>
<rect x="264" y="303" width="3" height="3"/>
<rect x="266" y="303" width="3" height="3"/>
<rect x="272" y="303" width="3" height="3"/>
<rect x="225" y="304" width="3" height="3"/>
<rect x="226" y="304" width="3" height="3"/>
<rect x="233" y="304" width="3" height="3"/>
<rect x="234" y="304" width="3" height="3"/>
<rect x="243" y="304" width="3" height="3"/>
<rect x="249" y="304" width="3" height="3"/>
<rect x="251" y="304" width="3" height="3"/>
<rect x="260" y="304" width="3" height="3"/>
<rect x="264" y="304" width="3" height="3"/>
<rect x="265" y="304" width="3" height="3"/>
<rect x="267" y="304" width="3" height="3"/>
<rect x="268" y="304" width="3" height="3"/>
<rect x="271" y="304" width="3" height="3"/>
<rect x="273" y="304" width="3" height="3"/>
<rect x="274" y="304" width="3" height="3"/>
<rect x="224" y="305" width="3" height="3"/>
<rect x="225" y="305" width="3" height="3"/>
<rect x="228" y="305" width="3" height="3"/>
<rect x="241" y="305" width="3" height="3"/>
<rect x="246" y="305" width="3" height="3"/>
<rect x="249" y="305" width="3" height="3"/>
<rect x="254" y="305" width="3" height="3"/>
<rect x="255" y="305" width="3" height="3"/>
<rect x="260" y="305" width="3" height="3"/>
<rect x="261" y="305" width="3" height="3"/>
<rect x="262" y="305" width="3" height="3"/>
<rect x="264" y="305" width="3" height="3"/>
<rect x="268" y="305" width="3" height="3"/>
<rect x="269" y="305" width="3" height="3"/>
<rect x="274" y="305" width="3" height="3"/>
<rect x="276" y="305" width="3" height="3"/>
<rect x="277" y="305" width="3" height="3"/>
<rect x="278" y="305" width="3" height="3"/>
<rect x="233" y="306" width="3" height="3"/>
<rect x="236" y="306" width="3" height="3"/>
<rect x="240" y="306" width="3" height="3"/>
<rect x="242" y="306" width="3" height="3"/>
<rect x="245" y="306" width="3" height="3"/>
<rect x="247" y="306" width="3" height="3"/>
<rect x="251" y="306" width="3" height="3"/>
<rect x="252" y="306" width="3" height="3"/>
<rect x="256" y="306" width="3" height="3"/>
<rect x="267" y="306" width="3" height="3"/>
<rect x="268" y="306" width="3" height="3"/>
<rect x="274" y="306" width="3" height="3"/>
<rect x="275" y="306" width="3" height="3"/>
<rect x="227" y="307" width="3" height="3"/>
<rect x="236" y="307" width="3" height="3"/>
<rect x="237" y="307" width="3" height="3"/>
<rect x="238" y="307" width="3" height="3"/>
<rect x="240" y="307" width="3" height="3"/>
<rect x="242" y="307" width="3" height="3"/>
<rect x="243" y="307" width="3" height="3"/>
<rect x="245" y="307" width="3" height="3"/>
<rect x="247" y="307" width="3" height="3"/>
<rect x="253" y="307" width="3" height="3"/>
<rect x="256" y="307" width="3" height="3"/>
<rect x="259" y="307" width="3" height="3"/>
<rect x="260" y="307" width="3" height="3"/>
<rect x="261" y="307" width="3" height="3"/>
<rect x="265" y="307" width="3" height="3"/>
<rect x="267" y="307" width="3" height="3"/>
<rect x="272" y="307" width="3" height="3"/>
<rect x="276" y="307" width="3" height="3"/>
<rect x="228" y="308" width="3" height="3"/>
<rect x="230" y="308" width="3" height="3"/>
<rect x="234" y="308" width="3" height="3"/>
<rect x="240" y="308" width="3" height="3"/>
<rect x="241" y="308" width="3" height="3"/>
<rect x="246" y="308" width="3" height="3"/>
<rect x="247" y="308" width="3" height="3"/>
<rect x="249" y="308" width="3" height="3"/>
<rect x="257" y="308" width="3" height="3"/>
<rect x="260" y="308" width="3" height="3"/>
<rect x="261" y="308" width="3" height="3"/>
<rect x="268" y="308" width="3" height="3"/>
<rect x="269" y="308" width="3" height="3"/>
<rect x="272" y="308" width="3" height="3"/>
<rect x="277" y="308" width="3" height="3"/>
<rect x="224" y="309" width="3" height="3"/>
<rect x="227" y="309" width="3" height="3"/>
<rect x="228" y="309" width="3" height="3"/>
<rect x="231" y="309" width="3" height="3"/>
<rect x="232" y="309" width="3" height="3"/>
<rect x="233" y="309" width="3" height="3"/>
<rect x="236" y="309" width="3" height="3"/>
<rect x="250" y="309" width="3" height="3"/>
<rect x="251" y="309" width="3" height="3"/>
<rect x="252" y="309" width="3" height="3"/>
<rect x="263" y="309" width="3" height="3"/>
<rect x="267" y="309" width="3" height="3"/>
<rect x="272" y="309" width="3" height="3"/>
<rect x="273" y="309" width="3" height="3"/>
<rect x="275" y="309" width="3" height="3"/>
<rect x="277" y="309" width="3" height="3"/>
<rect x="226" y="310" width="3" height="3"/>
<rect x="228" y="310" width="3" height="3"/>
<rect x="229" y="310" width="3" height="3"/>
<rect x="232" y="310" width="3" height="3"/>
<rect x="233" y="310" width="3" height="3"/>
<rect x="234" y="310" width="3" height="3"/>
<rect x="236" y="310" width="3" height="3"/>
<rect x="239" y="310" width="3" height="3"/>
<rect x="241" y="310" width="3" height="3"/>
<rect x="242" y="310" width="3" height="3"/>
<rect x="245" y="310" width="3" height="3"/>
<rect x="247" y="310" width="3" height="3"/>
<rect x="249" y="310" width="3" height="3"/>
<rect x="250" y="310" width="3" height="3"/>
<rect x="251" y="310" width="3" height="3"/>
<rect x="255" y="310" width="3" height="3"/>
<rect x="273" y="310" width="3" height="3"/>
<rect x="275" y="310" width="3" height="3"/>
<rect x="224" y="311" width="3" height="3"/>
<rect x="225" y="311" width="3" height="3"/>
<rect x="227" y="311" width="3" height="3"/>
<rect x="228" y="311" width="3" height="3"/>
<rect x="233" y="311" width="3" height="3"/>
<rect x="234" y="311" width="3" height="3"/>
<rect x="245" y="311" width="3" height="3"/>
<rect x="249" y="311" width="3" height="3"/>
<rect x="252" y="311" width="3" height="3"/>
<rect x="255" y="311" width="3" height="3"/>
<rect x="256" y="311" width="3" height="3"/>
<rect x="260" y="311" width="3" height="3"/>
<rect x="261" y="311" width="3" height="3"/>
<rect x="262" y="311" width="3" height="3"/>
<rect x="266" y="311" width="3" height="3"/>
<rect x="267" y="311" width="3" height="3"/>
<rect x="270" y="311" width="3" height="3"/>
<rect x="272" y="311" width="3" height="3"/>
<rect x="276" y="311" width="3" height="3"/>
<rect x="227" y="312" width="3" height="3"/>
<rect x="235" y="312" width="3" height="3"/>
<rect x="243" y="312" width="3" height="3"/>
<rect x="246" y="312" width="3" height="3"/>
<rect x="247" y="312" width="3" height="3"/>
<rect x="248" y="312" width="3" height="3"/>
<rect x="250" y="312" width="3" height="3"/>
<rect x="254" y="312" width="3" height="3"/>
<rect x="255" y="312" width="3" height="3"/>
<rect x="256" y="312" width="3" height="3"/>
<rect x="260" y="312" width="3" height="3"/>
<rect x="261" y="312" width="3" height="3"/>
<rect x="265" y="312" width="3" height="3"/>
<rect x="270" y="312" width="3" height="3"/>
<rect x="275" y="312" width="3" height="3"/>
<rect x="276" y="312" width="3" height="3"/>
<rect x="226" y="313" width="3" height="3"/>
<rect x="227" y="313" width="3" height="3"/>
<rect x="233" y="313" width="3" height="3"/>
<rect x="239" y="313" width="3" height="3"/>
<rect x="244" y="313" width="3" height="3"/>
<rect x="247" y="313" width="3" height="3"/>
<rect x="251" y="313" width="3" height="3"/>
<rect x="252" y="313" width="3" height="3"/>
<rect x="256" y="313" width="3" height="3"/>
<rect x="258" y="313" width="3" height="3"/>
<rect x="262" y="313" width="3" height="3"/>
<rect x="263" y="313" width="3" height="3"/>
<rect x="265" y="313" width="3" height="3"/>
<rect x="269" y="313" width="3" height="3"/>
<rect x="271" y="313" width="3" height="3"/>
<rect x="272" y="313" width="3" height="3"/>
<rect x="273" y="313" width="3" height="3"/>
<rect x="274" y="313" width="3" height="3"/>
<rect x="227" y="314" width="3" height="3"/>
<rect x="230" y="314" width="3" height="3"/>
<rect x="235" y="314" width="3" height="3"/>
<rect x="236" y="314" width="3" height="3"/>
<rect x="237" y="314" width="3" height="3"/>
<rect x="238" y="314" width="3" height="3"/>
<rect x="241" y="314" width="3" height="3"/>
<rect x="246" y="314" width="3" height="3"/>
<rect x="247" y="314" width="3" height="3"/>
<rect x="248" y="314" width="3" height="3"/>
<rect x="251" y="314" width="3" height="3"/>
<rect x="254" y="314" width="3" height="3"/>
<rect x="256" y="314" width="3" height="3"/>
<rect x="266" y="314" width="3" height="3"/>
<rect x="270" y="314" width="3" height="3"/>
<rect x="226" y="315" width="3" height="3"/>
<rect x="240" y="315" width="3" height="3"/>
<rect x="241" y="315" width="3" height="3"/>
<rect x="245" y="315" width="3" height="3"/>
<rect x="246" y="315" width="3" height="3"/>
<rect x="247" y="315" width="3" height="3"/>
<rect x="249" y="315" width="3" height="3"/>
<rect x="255" y="315" width="3" height="3"/>
<rect x="257" y="315" width="3" height="3"/>
<rect x="258" y="315" width="3" height="3"/>
<rect x="268" y="315" width="3" height="3"/>
<rect x="270" y="315" width="3" height="3"/>
<rect x="272" y="315" width="3" height="3"/>
<rect x="274" y="315" width="3" height="3"/>
<rect x="275" y="315" width="3" height="3"/>
<rect x="228" y="316" width="3" height="3"/>
<rect x="230" y="316" width="3" height="3"/>
<rect x="232" y="316" width="3" height="3"/>
<rect x="241" y="316" width="3" height="3"/>
<rect x="249" y="316" width="3" height="3"/>
<rect x="253" y="316" width="3" height="3"/>
<rect x="260" y="316" width="3" height="3"/>
<rect x="265" y="316" width="3" height="3"/>
<rect x="268" y="316" width="3" height="3"/>
<rect x="270" y="316" width="3" height="3"/>
<rect x="275" y="316" width="3" height="3"/>
<rect x="225" y="317" width="3" height="3"/>
<rect x="229" y="317" width="3" height="3"/>
<rect x="233" y="317" width="3" height="3"/>
<rect x="236" y="317" width="3" height="3"/>
<rect x="240" y="317" width="3" height="3"/>
<rect x="241" y="317" width="3" height="3"/>
<rect x="251" y="317" width="3" height="3"/>
<rect x="258" y="317" width="3" height="3"/>
<rect x="262" y="317" width="3" height="3"/>
<rect x="267" y="317" width="3" height="3"/>
<rect x="269" y="317" width="3" height="3"/>
<rect x="270" y="317" width="3" height="3"/>
<rect x="271" y="317" width="3" height="3"/>
<rect x="273" y="317" width="3" height="3"/>
<rect x="274" y="317" width="3" height="3"/>
<rect x="275" y="317" width="3" height="3"/>
<rect x="237" y="318" width="3" height="3"/>
<rect x="238" y="318" width="3" height="3"/>
<rect x="244" y="318" width="3" height="3"/>
<rect x="249" y="318" width="3" height="3"/>
<rect x="254" y="318" width="3" height="3"/>
<rect x="255" y="318" width="3" height="3"/>
<rect x="258" y="318" width="3" height="3"/>
<rect x="260" y="318" width="3" height="3"/>
<rect x="266" y="318" width="3" height="3"/>
<rect x="273" y="318" width="3" height="3"/>
<rect x="225" y="319" width="3" height="3"/>
<rect x="228" y="319" width="3" height="3"/>
<rect x="234" y="319" width="3" height="3"/>
<rect x="238" y="319" width="3" height="3"/>
<rect x="239" y="319" width="3" height="3"/>
<rect x="242" y="319" width="3" height="3"/>
<rect x="247" y="319" width="3" height="3"/>
<rect x="251" y="319" width="3" height="3"/>
<rect x="260" y="319" width="3" height="3"/>
<rect x="268" y="319" width="3" height="3"/>
<rect x="270" y="319" width="3" height="3"/>
<rect x="226" y="320" width="3" height="3"/>
<rect x="228" y="320" width="3" height="3"/>
<rect x="233" y="320" width="3" height="3"/>
<rect x="239" y="320" width="3" height="3"/>
<rect x="240" y="320" width="3" height="3"/>
<rect x="245" y="320" width="3" height="3"/>
<rect x="249" y="320" width="3" height="3"/>
<rect x="251" y="320" width="3" height="3"/>
<rect x="255" y="320" width="3" height="3"/>
<rect x="259" y="320" width="3" height="3"/>
<rect x="260" y="320" width="3" height="3"/>
<rect x="263" y="320" width="3" height="3"/>
<rect x="264" y="320" width="3" height="3"/>
<rect x="225" y="321" width="3" height="3"/>
<rect x="227" y="321" width="3" height="3"/>
<rect x="228" y="321" width="3" height="3"/>
<rect x="231" y="321" width="3" height="3"/>
<rect x="233" y="321" width="3" height="3"/>
<rect x="234" y="321" width="3" height="3"/>
<rect x="242" y="321" width="3" height="3"/>
<rect x="244" y="321" width="3" height="3"/>
<rect x="246" y="321" width="3" height="3"/>
<rect x="247" y="321" width="3" height="3"/>
<rect x="252" y="321" width="3" height="3"/>
<rect x="255" y="321" width="3" height="3"/>
<rect x="256" y="321" width="3" height="3"/>
<rect x="257" y="321" width="3" height="3"/>
<rect x="258" y="321" width="3" height="3"/>
<rect x="259" y="321" width="3" height="3"/>
<rect x="260" y="321" width="3" height="3"/>
<rect x="235" y="322" width="3" height="3"/>
<rect x="236" y="322" width="3" height="3"/>
<rect x="239" y="322" width="3" height="3"/>
<rect x="241" y="322" width="3" height="3"/>
<rect x="242" y="322" width="3" height="3"/>
<rect x="245" y="322" width="3" height="3"/>
<rect x="247" y="322" width="3" height="3"/>
<rect x="249" y="322" width="3" height="3"/>
<rect x="253" y="322" width="3" height="3"/>
<rect x="254" y="322" width="3" height="3"/>
<rect x="257" y="322" width="3" height="3"/>
<rect x="263" y="322" width="3" height="3"/>
<rect x="267" y="322" width="3" height="3"/>
<rect x="235" y="323" width="3" height="3"/>
<rect x="241" y="323" width="3" height="3"/>
<rect x="247" y="323" width="3" height="3"/>
<rect x="249" y="323" width="3" height="3"/>
<rect x="250" y="323" width="3" height="3"/>
<rect x="253" y="323" width="3" height="3"/>
<rect x="254" y="323" width="3" height="3"/>
<rect x="262" y="323" width="3" height="3"/>
<rect x="263" y="323" width="3" height="3"/>
<rect x="265" y="323" width="3" height="3"/>
<rect x="235" y="324" width="3" height="3"/>
<rect x="239" y="324" width="3" height="3"/>
<rect x="240" y="324" width="3" height="3"/>
<rect x="243" y="324" width="3" height="3"/>
<rect x="245" y="324" width="3" height="3"/>
<rect x="249" y="324" width="3" height="3"/>
<rect x="251" y="324" width="3" height="3"/>
<rect x="253" y="324" width="3" height="3"/>
<rect x="254" y="324" width="3" height="3"/>
<rect x="259" y="324" width="3" height="3"/>
<rect x="261" y="324" width="3" height="3"/>
<rect x="262" y="324" width="3" height="3"/>
<rect x="263" y="324" width="3" height="3"/>
<rect x="264" y="324" width="3" height="3"/>
<rect x="248" y="325" width="3" height="3"/>
<rect x="249" y="325" width="3" height="3"/>
<rect x="260" y="325" width="3" height="3"/>
<rect x="226" y="286" width="3" height="3"/>
<rect x="273" y="274" width="3" height="3"/>
<rect x="219" y="304" width="3" height="3"/>
<rect x="278" y="273" width="3" height="3"/>
<rect x="292" y="301" width="3" height="3"/>
<rect x="286" y="303" width="3" height="3"/>
<rect x="271" y="328" width="3" height="3"/>
<rect x="235" y="275" width="3" height="3"/>
<rect x="292" y="273" width="3" height="3"/>
<rect x="226" y="293" width="3" height="3"/>
<rect x="232" y="277" width="3" height="3"/>
<rect x="296" y="299" width="3" height="3"/>
<rect x="254" y="275" width="3" height="3"/>
<rect x="213" y="311" width="3" height="3"/>
<rect x="223" y="302" width="3" height="3"/>
<rect x="296" y="263" width="3" height="3"/>
<rect x="233" y="329" width="3" height="3"/>
<rect x="237" y="327" width="3" height="3"/>
<rect x="246" y="334" width="3" height="3"/>
<rect x="225" y="291" width="3" height="3"/>
<rect x="267" y="278" width="3" height="3"/>
<rect x="241" y="269" width="3" height="3"/>
<rect x="229" y="289" width="3" height="3"/>
<rect x="252" y="273" width="3" height="3"/>
<rect x="278" y="324" width="3" height="3"/>
<rect x="291" y="294" width="3" height="3"/>
<rect x="276" y="331" width="3" height="3"/>
<rect x="249" y="273" width="3" height="3"/>
<rect x="224" y="329" width="3" height="3"/>
<rect x="292" y="282" width="3" height="3"/>
<rect x="285" y="273" width="3" height="3"/>
<rect x="238" y="272" width="3" height="3"/>
<rect x="262" y="280" width="3" height="3"/>
<rect x="235" y="280" width="3" height="3"/>
<rect x="280" y="276" width="3" height="3"/>
<rect x="217" y="301" width="3" height="3"/>
<rect x="232" y="336" width="3" height="3"/>
<rect x="249" y="282" width="3" height="3"/>
<rect x="215" y="326" width="3" height="3"/>
<rect x="237" y="334" width="3" height="3"/>
<rect x="296" y="289" width="3" height="3"/>
<rect x="270" y="332" width="3" height="3"/>
<rect x="275" y="283" width="3" height="3"/>
<rect x="257" y="332" width="3" height="3"/>
<rect x="222" y="304" width="3" height="3"/>
<rect x="231" y="286" width="3" height="3"/>
<rect x="278" y="307" width="3" height="3"/>
<rect x="244" y="272" width="3" height="3"/>
<rect x="288" y="296" width="3" height="3"/>
<rect x="259" y="280" width="3" height="3"/>
<rect x="233" y="281" width="3" height="3"/>
<rect x="284" y="309" width="3" height="3"/>
<rect x="273" y="281" width="3" height="3"/>
<rect x="236" y="276" width="3" height="3"/>
<rect x="236" y="327" width="3" height="3"/>
<rect x="299" y="261" width="3" height="3"/>
<rect x="227" y="290" width="3" height="3"/>
<rect x="289" y="269" width="3" height="3"/>
<rect x="303" y="289" width="3" height="3"/>
<rect x="273" y="284" width="3" height="3"/>
<rect x="229" y="297" width="3" height="3"/>
<rect x="227" y="289" width="3" height="3"/>
<rect x="227" y="294" width="3" height="3"/>
<rect x="286" y="300" width="3" height="3"/>
<rect x="230" y="297" width="3" height="3"/>
<rect x="222" y="326" width="3" height="3"/>
<rect x="264" y="280" width="3" height="3"/>
<rect x="229" y="326" width="3" height="3"/>
<rect x="232" y="338" width="3" height="3"/>
<rect x="281" y="311" width="3" height="3"/>
<rect x="226" y="327" width="3" height="3"/>
<rect x="256" y="333" width="3" height="3"/>
<rect x="260" y="337" width="3" height="3"/>
<rect x="291" y="271" width="3" height="3"/>
<rect x="222" y="296" width="3" height="3"/>
<rect x="237" y="278" width="3" height="3"/>
<rect x="243" y="332" width="3" height="3"/>
<rect x="290" y="285" width="3" height="3"/>
<rect x="228" y="287" width="3" height="3"/>
<rect x="230" y="279" width="3" height="3"/>
<rect x="249" y="279" width="3" height="3"/>
<rect x="278" y="319" width="3" height="3"/>
<rect x="262" y="276" width="3" height="3"/>
<rect x="299" y="292" width="3" height="3"/>
<rect x="264" y="328" width="3" height="3"/>
<rect x="283" y="275" width="3" height="3"/>
<rect x="232" y="334" width="3" height="3"/>
<rect x="224" y="287" width="3" height="3"/>
<rect x="295" y="292" width="3" height="3"/>
<rect x="284" y="315" width="3" height="3"/>
<rect x="230" y="276" width="3" height="3"/>
<rect x="286" y="273" width="3" height="3"/>
<rect x="239" y="328" width="3" height="3"/>
<rect x="300" y="265" width="3" height="3"/>
<rect x="214" y="308" width="3" height="3"/>
<rect x="281" y="317" width="3" height="3"/>
<rect x="218" y="301" width="3" height="3"/>
<rect x="286" y="271" width="3" height="3"/>
<rect x="287" y="304" width="3" height="3"/>
<rect x="283" y="313" width="3" height="3"/>
<rect x="234" y="285" width="3" height="3"/>
<rect x="261" y="278" width="3" height="3"/>
<rect x="294" y="293" width="3" height="3"/>
<rect x="217" y="296" width="3" height="3"/>
<rect x="221" y="310" width="3" height="3"/>
<rect x="253" y="272" width="3" height="3"/>
<rect x="281" y="298" width="3" height="3"/>
<rect x="220" y="314" width="3" height="3"/>
<rect x="218" y="303" width="3" height="3"/>
<rect x="282" y="312" width="3" height="3"/>
<rect x="284" y="276" width="3" height="3"/>
<rect x="283" y="274" width="3" height="3"/>
<rect x="288" y="273" width="3" height="3"/>
<rect x="292" y="270" width="3" height="3"/>
<rect x="293" y="270" width="3" height="3"/>
<rect x="297" y="267" width="3" height="3"/>
<rect x="299" y="266" width="3" height="3"/>
<rect x="301" y="266" width="3" height="3"/>
<rect x="304" y="265" width="3" height="3"/>
<rect x="307" y="265" width="3" height="3"/>
<rect x="309" y="264" width="3" height="3"/>
<rect x="312" y="262" width="3" height="3"/>
<rect x="315" y="262" width="3" height="3"/>
<rect x="313" y="262" width="3" height="3"/>
<rect x="316" y="262" width="3" height="3"/>
<rect x="318" y="261" width="3" height="3"/>
<rect x="321" y="260" width="3" height="3"/>
<rect x="324" y="258" width="3" height="3"/>
<rect x="325" y="257" width="3" height="3"/>
<rect x="325" y="256" width="3" height="3"/>
<rect x="329" y="255" width="3" height="3"/>
<rect x="328" y="256" width="3" height="3"/>
<rect x="331" y="254" width="3" height="3"/>
<rect x="333" y="252" width="3" height="3"/>
<rect x="334" y="252" width="3" height="3"/>
<rect x="336" y="249" width="3" height="3"/>
<rect x="338" y="250" width="3" height="3"/>
<rect x="288" y="288" width="3" height="3"/>
<rect x="292" y="288" width="3" height="3"/>
<rect x="293" y="288" width="3" height="3"/>
<rect x="294" y="287" width="3" height="3"/>
<rect x="297" y="285" width="3" height="3"/>
<rect x="301" y="283" width="3" height="3"/>
<rect x="303" y="282" width="3" height="3"/>
<rect x="304" y="282" width="3" height="3"/>
<rect x="307" y="281" width="3" height="3"/>
<rect x="309" y="280" width="3" height="3"/>
<rect x="310" y="277" width="3" height="3"/>
<rect x="311" y="277" width="3" height="3"/>
<rect x="315" y="277" width="3" height="3"/>
<rect x="317" y="276" width="3" height="3"/>
<rect x="317" y="273" width="3" height="3"/>
<rect x="319" y="273" width="3" height="3"/>
<rect x="321" y="272" width="3" height="3"/>
<rect x="322" y="268" width="3" height="3"/>
<rect x="324" y="267" width="3" height="3"/>
<rect x="324" y="265" width="3" height="3"/>
<rect x="327" y="264" width="3" height="3"/>
<rect x="327" y="263" width="3" height="3"/>
<rect x="329" y="261" width="3" height="3"/>
<rect x="332" y="261" width="3" height="3"/>
<rect x="333" y="258" width="3" height="3"/>
<rect x="337" y="258" width="3" height="3"/>
<rect x="316" y="266" width="3" height="3"/>
<rect x="320" y="266" width="3" height="3"/>
<rect x="322" y="265" width="3" height="3"/>
<rect x="324" y="264" width="3" height="3"/>
<rect x="328" y="260" width="3" height="3"/>
<rect x="328" y="261" width="3" height="3"/>
<rect x="330" y="260" width="3" height="3"/>
<rect x="335" y="256" width="3" height="3"/>
<rect x="300" y="273" width="3" height="3"/>
<rect x="301" y="272" width="3" height="3"/>
<rect x="303" y="272" width="3" height="3"/>
<rect x="306" y="271" width="3" height="3"/>
<rect x="309" y="271" width="3" height="3"/>
<rect x="311" y="268" width="3" height="3"/>
<rect x="339" y="252" width="3" height="3"/>
<rect x="338" y="257" width="3" height="3"/>
<rect x="327" y="271" width="3" height="3"/>
<rect x="307" y="264" width="3" height="3"/>
<rect x="284" y="302" width="3" height="3"/>
<rect x="294" y="304" width="3" height="3"/>
<rect x="306" y="304" width="3" height="3"/>
<rect x="293" y="305" width="3" height="3"/>
<rect x="306" y="305" width="3" height="3"/>
<rect x="286" y="306" width="3" height="3"/>
<rect x="292" y="306" width="3" height="3"/>
<rect x="295" y="306" width="3" height="3"/>
<rect x="298" y="306" width="3" height="3"/>
<rect x="286" y="307" width="3" height="3"/>
<rect x="293" y="307" width="3" height="3"/>
<rect x="298" y="307" width="3" height="3"/>
<rect x="304" y="307" width="3" height="3"/>
<rect x="283" y="308" width="3" height="3"/>
<rect x="287" y="308" width="3" height="3"/>
<rect x="291" y="308" width="3" height="3"/>
<rect x="295" y="309" width="3" height="3"/>
<rect x="296" y="309" width="3" height="3"/>
<rect x="289" y="310" width="3" height="3"/>
<rect x="294" y="310" width="3" height="3"/>
<rect x="282" y="311" width="3" height="3"/>
<rect x="295" y="311" width="3" height="3"/>
<rect x="283" y="312" width="3" height="3"/>
<rect x="292" y="312" width="3" height="3"/>
<rect x="284" y="313" width="3" height="3"/>
<rect x="290" y="313" width="3" height="3"/>
<rect x="306" y="313" width="3" height="3"/>
<rect x="283" y="314" width="3" height="3"/>
<rect x="293" y="314" width="3" height="3"/>
<rect x="298" y="314" width="3" height="3"/>
<rect x="286" y="315" width="3" height="3"/>
<rect x="297" y="315" width="3" height="3"/>
<rect x="290" y="316" width="3" height="3"/>
<rect x="296" y="316" width="3" height="3"/>
<rect x="303" y="316" width="3" height="3"/>
<rect x="304" y="316" width="3" height="3"/>
<rect x="299" y="317" width="3" height="3"/>
<rect x="306" y="317" width="3" height="3"/>
<rect x="283" y="318" width="3" height="3"/>
<rect x="294" y="318" width="3" height="3"/>
<rect x="296" y="318" width="3" height="3"/>
<rect x="288" y="319" width="3" height="3"/>
<rect x="289" y="319" width="3" height="3"/>
<rect x="294" y="319" width="3" height="3"/>
<rect x="282" y="320" width="3" height="3"/>
<rect x="283" y="320" width="3" height="3"/>
<rect x="291" y="320" width="3" height="3"/>
<rect x="299" y="320" width="3" height="3"/>
<rect x="301" y="320" width="3" height="3"/>
<rect x="285" y="321" width="3" height="3"/>
<rect x="291" y="321" width="3" height="3"/>
<rect x="295" y="321" width="3" height="3"/>
<rect x="291" y="322" width="3" height="3"/>
<rect x="296" y="323" width="3" height="3"/>
<rect x="298" y="323" width="3" height="3"/>
<rect x="287" y="324" width="3" height="3"/>
<rect x="295" y="324" width="3" height="3"/>
<rect x="270" y="326" width="3" height="3"/>
<rect x="272" y="325" width="3" height="3"/>
<rect x="274" y="326" width="3" height="3"/>
<rect x="276" y="325" width="3" height="3"/>
<rect x="279" y="326" width="3" height="3"/>
<rect x="281" y="324" width="3" height="3"/>
<rect x="285" y="324" width="3" height="3"/>
<rect x="286" y="324" width="3" height="3"/>
<rect x="290" y="322" width="3" height="3"/>
<rect x="176" y="283" width="3" height="3"/>
<rect x="179" y="283" width="3" height="3"/>
<rect x="183" y="283" width="3" height="3"/>
<rect x="185" y="283" width="3" height="3"/>
<rect x="188" y="284" width="3" height="3"/>
<rect x="191" y="284" width="3" height="3"/>
<rect x="194" y="284" width="3" height="3"/>
<rect x="182" y="277" width="3" height="3"/>
<rect x="185" y="276" width="3" height="3"/>
<rect x="189" y="275" width="3" height="3"/>
<rect x="189" y="280" width="3" height="3"/>
<rect x="192" y="281" width="3" height="3"/>
<rect x="195" y="281" width="3" height="3"/>
<rect x="185" y="288" width="3" height="3"/>
<rect x="188" y="289" width="3" height="3"/>
<rect x="192" y="289" width="3" height="3"/>
<rect x="196" y="286" width="3" height="3"/>
<rect x="199" y="286" width="3" height="3"/>
<rect x="202" y="288" width="3" height="3"/>
<rect x="205" y="289" width="3" height="3"/>
<rect x="208" y="290" width="3" height="3"/>
<rect x="211" y="291" width="3" height="3"/>
<rect x="200" y="292" width="3" height="3"/>
<rect x="200" y="295" width="3" height="3"/>
<rect x="201" y="298" width="3" height="3"/>
<rect x="208" y="296" width="3" height="3"/>
<rect x="210" y="300" width="3" height="3"/>
<rect x="212" y="302" width="3" height="3"/>
<rect x="184" y="304" width="3" height="3"/>
<rect x="188" y="305" width="3" height="3"/>
<rect x="192" y="305" width="3" height="3"/>
<rect x="213" y="303" width="3" height="3"/>
<rect x="214" y="303" width="3" height="3"/>
<rect x="211" y="313" width="3" height="3"/>
<rect x="212" y="315" width="3" height="3"/>
<rect x="171" y="314" width="3" height="3"/>
<rect x="173" y="313" width="3" height="3"/>
<rect x="176" y="311" width="3" height="3"/>
<rect x="178" y="310" width="3" height="3"/>
<rect x="181" y="307" width="3" height="3"/>
<rect x="167" y="315" width="3" height="3"/>
<rect x="171" y="317" width="3" height="3"/>
<rect x="174" y="319" width="3" height="3"/>
<rect x="177" y="321" width="3" height="3"/>
<rect x="157" y="321" width="3" height="3"/>
<rect x="161" y="319" width="3" height="3"/>
<rect x="165" y="318" width="3" height="3"/>
<rect x="156" y="324" width="3" height="3"/>
<rect x="159" y="326" width="3" height="3"/>
<rect x="162" y="328" width="3" height="3"/>
<rect x="167" y="323" width="3" height="3"/>
<rect x="171" y="324" width="3" height="3"/>
<rect x="175" y="325" width="3" height="3"/>
<rect x="176" y="327" width="3" height="3"/>
<rect x="179" y="328" width="3" height="3"/>
<rect x="249" y="337" width="3" height="3"/>
<rect x="248" y="339" width="3" height="3"/>
<rect x="246" y="340" width="3" height="3"/>
<rect x="246" y="343" width="3" height="3"/>
<rect x="242" y="345" width="3" height="3"/>
<rect x="243" y="345" width="3" height="3"/>
<rect x="241" y="349" width="3" height="3"/>
<rect x="239" y="349" width="3" height="3"/>
<rect x="237" y="351" width="3" height="3"/>
<rect x="234" y="353" width="3" height="3"/>
<rect x="236" y="352" width="3" height="3"/>
<rect x="233" y="355" width="3" height="3"/>
<rect x="231" y="355" width="3" height="3"/>
<rect x="229" y="357" width="3" height="3"/>
<rect x="228" y="359" width="3" height="3"/>
<rect x="227" y="360" width="3" height="3"/>
<rect x="225" y="361" width="3" height="3"/>
<rect x="223" y="362" width="3" height="3"/>
<rect x="222" y="362" width="3" height="3"/>
<rect x="218" y="364" width="3" height="3"/>
<rect x="215" y="366" width="3" height="3"/>
<rect x="251" y="341" width="3" height="3"/>
<rect x="254" y="341" width="3" height="3"/>
<rect x="256" y="342" width="3" height="3"/>
<rect x="258" y="342" width="3" height="3"/>
<rect x="261" y="344" width="3" height="3"/>
<rect x="242" y="356" width="3" height="3"/>
<rect x="245" y="359" width="3" height="3"/>
<rect x="237" y="349" width="3" height="3"/>
<rect x="261" y="346" width="3" height="3"/>
</g>
<rect x="248" y="331" width="3" height="3" fill="#ffff00"/>
<text x="252.5" y="155" text-anchor="middle" style="font-family:Liberation Sans;font-size:12px;fill:#e6e6e6">N</text>
<text x="252.5" y="458" text-anchor="middle" style="font-family:Liberation Sans;font-size:12px;fill:#e6e6e6">S</text>
<text x="100" y="306" text-anchor="middle" style="font-family:Liberation Sans;font-size:12px;fill:#e6e6e6">W</text>
<text x="406" y="305" text-anchor="middle" style="font-family:Liberation Sans;font-size:12px;fill:#e6e6e6">E</text>
<text x="327" y="315" text-anchor="middle" style="font-family:Liberation Sans;font-size:12px;fill:#e6e6e6;letter-spacing:-0.5px">25m</text>
<text x="397" y="315" text-anchor="middle" style="font-family:Liberation Sans;font-size:12px;fill:#e6e6e6;letter-spacing:-0.5px">50m</text>
<text x="488" y="463" text-anchor="end" style="font-family:Liberation Sans;font-size:12px;fill:#e6e6e6;letter-spacing:-0.6px">47.902295° 11.368996°</text>
</svg>
<div class="ab" style="left:9px;top:469px;width:485px;height:27px;background:#f0f0f0"></div>
<svg class="ab" style="left:9px;top:469px" width="486" height="28" viewBox="9 469 486 28" shape-rendering="crispEdges">
<defs><pattern id="dith2" width="2" height="2" patternUnits="userSpaceOnUse"><rect width="2" height="2" fill="#fafafa"/><rect width="1" height="1" fill="#e8e8e8"/><rect x="1" y="1" width="1" height="1" fill="#e8e8e8"/></pattern></defs>
<rect x="9" y="469" width="486" height="28" fill="#f0f0f0"/>
<rect x="11" y="469" width="482" height="1" fill="#fff"/>
<rect x="12.5" y="482.5" width="12" height="9" fill="#fff" stroke="#000"/><path d="M14 482 L19 478 L24 482" fill="#c0c0c0" stroke="#000"/><rect x="25" y="478" width="3" height="6" fill="#0000a0"/><rect x="15" y="486" width="8" height="1" fill="#000"/><rect x="15" y="488" width="8" height="1" fill="#000"/>
<rect x="34" y="476" width="1" height="18" fill="#a0a0a0"/><rect x="35" y="476" width="1" height="18" fill="#fff"/>
<path d="M49.5 477 V492 M42 484.5 H57" stroke="#000" stroke-width="1.5"/><path d="M47 479 L49.5 476.5 L52 479 Z M47 490 L49.5 492.5 L52 490 Z M44 482 L41.5 484.5 L44 487 Z M55 482 L57.5 484.5 L55 487 Z" fill="#000"/><rect x="46" y="477" width="7" height="1" fill="#000"/><rect x="46" y="492" width="7" height="1" fill="#000"/><rect x="42" y="481" width="1" height="7" fill="#000"/><rect x="56" y="481" width="1" height="7" fill="#000"/>
<rect x="63" y="476" width="1" height="18" fill="#a0a0a0"/><rect x="64" y="476" width="1" height="18" fill="#fff"/>
<rect x="67" y="474" width="22" height="22" fill="url(#dith2)"/><rect x="67" y="474" width="22" height="1" fill="#a0a0a0"/><rect x="67" y="474" width="1" height="22" fill="#a0a0a0"/><rect x="67" y="495" width="22" height="1" fill="#fff"/><rect x="88" y="474" width="1" height="22" fill="#fff"/>
<path d="M86 479 L77 484 Q74 487 78 489 L83 490" stroke="#00ff00" stroke-width="1.2" fill="none" shape-rendering="auto"/><rect x="82" y="489" width="3" height="3" fill="#ffff00"/>
<path d="M97 477 V492 M104 477 V492 M93 481 H109 M93 488 H109" stroke="#ff00ff" stroke-width="1"/><rect x="99" y="483" width="3" height="3" fill="#ffff00"/>
<rect x="115" y="476" width="1" height="18" fill="#a0a0a0"/><rect x="116" y="476" width="1" height="18" fill="#fff"/>
<rect x="188" y="474" width="0" height="0"/>
<rect x="188" y="474" width="22" height="22" fill="url(#dith2)"/><rect x="188" y="474" width="22" height="1" fill="#a0a0a0"/><rect x="188" y="474" width="1" height="22" fill="#a0a0a0"/><rect x="188" y="495" width="22" height="1" fill="#fff"/><rect x="209" y="474" width="1" height="22" fill="#fff"/>
<rect x="286" y="474" width="22" height="22" fill="url(#dith2)"/><rect x="286" y="474" width="22" height="1" fill="#a0a0a0"/><rect x="286" y="474" width="1" height="22" fill="#a0a0a0"/><rect x="286" y="495" width="22" height="1" fill="#fff"/><rect x="307" y="474" width="1" height="22" fill="#fff"/>
<rect x="282" y="476" width="1" height="18" fill="#a0a0a0"/><rect x="283" y="476" width="1" height="18" fill="#fff"/>
<text x="130" y="489.5" text-anchor="middle" style="font-family:Liberation Sans;font-weight:bold;font-size:13px;fill:#000">I</text>
<text x="153" y="489.5" text-anchor="middle" style="font-family:Liberation Sans;font-weight:bold;font-size:13px;fill:#000">V</text>
<text x="176.5" y="489.5" text-anchor="middle" style="font-family:Liberation Sans;font-weight:bold;font-size:13px;fill:#000">X</text>
<text x="200.5" y="489.5" text-anchor="middle" style="font-family:Liberation Sans;font-weight:bold;font-size:13px;fill:#000">L</text>
<text x="222.5" y="489.5" text-anchor="middle" style="font-family:Liberation Sans;font-weight:bold;font-size:13px;fill:#000">C</text>
<text x="245.5" y="489.5" text-anchor="middle" style="font-family:Liberation Sans;font-weight:bold;font-size:13px;fill:#000">D</text>
<text x="268" y="489.5" text-anchor="middle" style="font-family:Liberation Sans;font-weight:bold;font-size:13px;fill:#000">M</text>
<text x="298" y="489.5" text-anchor="middle" style="font-family:Liberation Sans;font-weight:bold;font-size:13px;fill:#000">A</text>
<text x="321" y="489.5" text-anchor="middle" style="font-family:Liberation Sans;font-weight:bold;font-size:13px;fill:#000">C</text>
</svg>
<div class="ab" style="left:0px;top:505px;width:503px;height:211px;background:linear-gradient(#c5d5e8,#d5e2f0 30px,#d8e5f2);border:1px solid #4a4a4a;border-radius:6px 6px 0 0"></div>
<svg class="ab" style="left:8px;top:514px" width="17" height="17"><path d="M0.5 0.5 H15.5 V12 L13 14.5 H11 L9 13 L6 15.5 L3 13.5 H0.5 Z" fill="#fff" stroke="#000"/><rect x="2" y="3" width="12" height="1" fill="#ddd"/><rect x="2" y="6" width="12" height="1" fill="#ddd"/><rect x="2" y="9" width="12" height="1" fill="#ddd"/><circle cx="7" cy="7" r="4.8" fill="#e80010"/><path d="M5.5 5.5 V9 H9 V5.5" stroke="#fff" stroke-width="1.2" fill="none"/><rect x="14" y="12" width="2" height="2" fill="#208080"/></svg>
<div class="t" style="left:31px;top:517px;font-size:12px;color:#505868;">Statistic View</div>
<div class="ab" style="left:397px;top:514px;width:30px;height:17px;background:linear-gradient(#eaf0f7,#dde6f0 50%,#d3dde9 51%,#dde6f0);border:1px solid #8090a8;border-radius:3px"></div>
<div class="ab" style="left:429px;top:514px;width:30px;height:17px;background:linear-gradient(#eaf0f7,#dde6f0 50%,#d3dde9 51%,#dde6f0);border:1px solid #8090a8;border-radius:3px"></div>
<div class="ab" style="left:406px;top:523px;width:11px;height:3px;background:#fff;border:1px solid #666"></div>
<div class="ab" style="left:439px;top:518px;width:10px;height:8px;border:2px solid #fff;outline:1px solid #666"></div>
<div class="ab" style="left:461px;top:514px;width:32px;height:17px;background:linear-gradient(#eaf0f7,#dde6f0 50%,#d3dde9 51%,#dde6f0);border:1px solid #8090a8;border-radius:3px"></div>
<svg class="ab" style="left:470px;top:517px" width="14" height="11"><path d="M3 3 L11 8 M11 3 L3 8" stroke="#505a70" stroke-width="4.5" stroke-linecap="round"/><path d="M3 3 L11 8 M11 3 L3 8" stroke="#fff" stroke-width="2.6" stroke-linecap="round"/></svg>
<div class="ab" style="left:10px;top:535px;width:486px;height:147px;background:#fff;border-top:1px solid #828790;border-left:1px solid #828790"></div>
<div class="ab" style="left:11px;top:536px;width:465px;height:18px;background:linear-gradient(#f6f6f6,#efefef 50%,#ebebeb)"></div>
<div class="ab" style="left:11px;top:553px;width:465px;height:1px;background:#d5d5d5"></div>
<div class="ab" style="left:99px;top:536px;width:1px;height:18px;background:#d5d5d5"></div>
<div class="ab" style="left:100px;top:536px;width:1px;height:18px;background:#fff"></div>
<div class="ab" style="left:149px;top:536px;width:1px;height:18px;background:#d5d5d5"></div>
<div class="ab" style="left:150px;top:536px;width:1px;height:18px;background:#fff"></div>
<div class="ab" style="left:200px;top:536px;width:1px;height:18px;background:#d5d5d5"></div>
<div class="ab" style="left:201px;top:536px;width:1px;height:18px;background:#fff"></div>
<div class="ab" style="left:256px;top:536px;width:1px;height:18px;background:#d5d5d5"></div>
<div class="ab" style="left:257px;top:536px;width:1px;height:18px;background:#fff"></div>
<div class="ab" style="left:322px;top:536px;width:1px;height:18px;background:#d5d5d5"></div>
<div class="ab" style="left:323px;top:536px;width:1px;height:18px;background:#fff"></div>
<div class="ab" style="left:390px;top:536px;width:1px;height:18px;background:#d5d5d5"></div>
<div class="ab" style="left:391px;top:536px;width:1px;height:18px;background:#fff"></div>
<div class="ab" style="left:469px;top:536px;width:1px;height:18px;background:#d5d5d5"></div>
<div class="ab" style="left:470px;top:536px;width:1px;height:18px;background:#fff"></div>
<div class="t" style="left:17px;top:540px;font-size:12px;color:#000;letter-spacing:-0.3px">Title</div>
<div class="t" style="left:-55px;width:200px;text-align:right;top:540px;font-size:12px;color:#000;letter-spacing:-0.5px;letter-spacing:-0.3px">Count</div>
<div class="t" style="left:-6px;width:200px;text-align:right;top:540px;font-size:12px;color:#000;letter-spacing:-0.5px;letter-spacing:-0.3px">Age</div>
<div class="t" style="left:50px;width:200px;text-align:right;top:540px;font-size:12px;color:#000;letter-spacing:-0.5px;letter-spacing:-0.3px">Current</div>
<div class="t" style="left:116px;width:200px;text-align:right;top:540px;font-size:12px;color:#000;letter-spacing:-0.5px;letter-spacing:-0.3px">Minimum</div>
<div class="t" style="left:184px;width:200px;text-align:right;top:540px;font-size:12px;color:#000;letter-spacing:-0.5px;letter-spacing:-0.3px">Maximum</div>
<div class="t" style="left:264px;width:200px;text-align:right;top:540px;font-size:12px;color:#000;letter-spacing:-0.5px;letter-spacing:-0.3px">Average</div>
<div class="ab" style="left:11px;top:572px;width:465px;height:1px;background:#f0f0f0"></div>
<div class="ab" style="left:11px;top:588px;width:465px;height:1px;background:#f0f0f0"></div>
<div class="ab" style="left:11px;top:604px;width:465px;height:1px;background:#f0f0f0"></div>
<div class="ab" style="left:11px;top:620px;width:465px;height:1px;background:#f0f0f0"></div>
<div class="ab" style="left:11px;top:636px;width:465px;height:1px;background:#f0f0f0"></div>
<div class="ab" style="left:11px;top:652px;width:465px;height:1px;background:#f0f0f0"></div>
<div class="ab" style="left:100px;top:554px;width:1px;height:110px;background:#f0f0f0"></div>
<div class="ab" style="left:150px;top:554px;width:1px;height:110px;background:#f0f0f0"></div>
<div class="ab" style="left:201px;top:554px;width:1px;height:110px;background:#f0f0f0"></div>
<div class="ab" style="left:257px;top:554px;width:1px;height:110px;background:#f0f0f0"></div>
<div class="ab" style="left:323px;top:554px;width:1px;height:110px;background:#f0f0f0"></div>
<div class="ab" style="left:391px;top:554px;width:1px;height:110px;background:#f0f0f0"></div>
<div class="ab" style="left:470px;top:554px;width:1px;height:110px;background:#f0f0f0"></div>
<div class="ab" style="left:11px;top:554px;width:465px;height:110px;overflow:hidden">
<div class="t" style="left:4px;top:5.5px;font-size:12px;letter-spacing:-0.4px">jamind</div>
<div class="t" style="left:-66px;width:200px;text-align:right;top:5.5px;font-size:12px;color:#000;letter-spacing:-0.4px">0</div>
<div class="t" style="left:253px;width:200px;text-align:right;top:5.5px;font-size:12px;color:#000;letter-spacing:-0.4px">0</div>
<div class="t" style="left:4px;top:21.600000000000023px;font-size:12px;letter-spacing:-0.4px">SVs Used</div>
<div class="t" style="left:-66px;width:200px;text-align:right;top:21.600000000000023px;font-size:12px;color:#000;letter-spacing:-0.4px">20435</div>
<div class="t" style="left:-17px;width:200px;text-align:right;top:21.600000000000023px;font-size:12px;color:#000;letter-spacing:-0.4px">0</div>
<div class="t" style="left:39px;width:200px;text-align:right;top:21.600000000000023px;font-size:12px;color:#000;letter-spacing:-0.4px">10</div>
<div class="t" style="left:105px;width:200px;text-align:right;top:21.600000000000023px;font-size:12px;color:#000;letter-spacing:-0.4px">5</div>
<div class="t" style="left:173px;width:200px;text-align:right;top:21.600000000000023px;font-size:12px;color:#000;letter-spacing:-0.4px">20</div>
<div class="t" style="left:253px;width:200px;text-align:right;top:21.600000000000023px;font-size:12px;color:#000;letter-spacing:-0.4px">13</div>
<div class="t" style="left:4px;top:37.700000000000045px;font-size:12px;letter-spacing:-0.4px">Used SVs</div>
<div class="t" style="left:-66px;width:200px;text-align:right;top:37.700000000000045px;font-size:12px;color:#000;letter-spacing:-0.4px">20435</div>
<div class="t" style="left:-17px;width:200px;text-align:right;top:37.700000000000045px;font-size:12px;color:#000;letter-spacing:-0.4px">0</div>
<div class="t" style="left:195px;top:37.700000000000045px;font-size:12px;color:#000;letter-spacing:-0.3px">G5,G1...</div>
<div class="t" style="left:4px;top:53.799999999999955px;font-size:12px;letter-spacing:-0.4px">SVs Tracked</div>
<div class="t" style="left:-66px;width:200px;text-align:right;top:53.799999999999955px;font-size:12px;color:#000;letter-spacing:-0.4px">20435</div>
<div class="t" style="left:-17px;width:200px;text-align:right;top:53.799999999999955px;font-size:12px;color:#000;letter-spacing:-0.4px">0</div>
<div class="t" style="left:39px;width:200px;text-align:right;top:53.799999999999955px;font-size:12px;color:#000;letter-spacing:-0.4px">22</div>
<div class="t" style="left:105px;width:200px;text-align:right;top:53.799999999999955px;font-size:12px;color:#000;letter-spacing:-0.4px">20</div>
<div class="t" style="left:173px;width:200px;text-align:right;top:53.799999999999955px;font-size:12px;color:#000;letter-spacing:-0.4px">27</div>
<div class="t" style="left:253px;width:200px;text-align:right;top:53.799999999999955px;font-size:12px;color:#000;letter-spacing:-0.4px">24</div>
<div class="t" style="left:4px;top:69.89999999999998px;font-size:12px;letter-spacing:-0.4px">Tracked SVs</div>
<div class="t" style="left:-66px;width:200px;text-align:right;top:69.89999999999998px;font-size:12px;color:#000;letter-spacing:-0.4px">20435</div>
<div class="t" style="left:-17px;width:200px;text-align:right;top:69.89999999999998px;font-size:12px;color:#000;letter-spacing:-0.4px">0</div>
<div class="t" style="left:195px;top:69.89999999999998px;font-size:12px;color:#3399ff;letter-spacing:-0.3px">G5,G7,...</div>
<div class="t" style="left:4px;top:86.0px;font-size:12px;letter-spacing:-0.4px">SV C/N0</div>
<div class="t" style="left:-66px;width:200px;text-align:right;top:86.0px;font-size:12px;color:#000;letter-spacing:-0.4px">20435</div>
<div class="t" style="left:-17px;width:200px;text-align:right;top:86.0px;font-size:12px;color:#000;letter-spacing:-0.4px">0</div>
<div class="t" style="left:39px;width:200px;text-align:right;top:86.0px;font-size:12px;color:#3399ff;letter-spacing:-0.4px">17.08</div>
<div class="t" style="left:105px;width:200px;text-align:right;top:86.0px;font-size:12px;color:#000;letter-spacing:-0.4px">11.42</div>
<div class="t" style="left:173px;width:200px;text-align:right;top:86.0px;font-size:12px;color:#000;letter-spacing:-0.4px">21.88</div>
<div class="t" style="left:253px;width:200px;text-align:right;top:86.0px;font-size:12px;color:#000;letter-spacing:-0.4px">17.04</div>
<div class="t" style="left:4px;top:102.10000000000002px;font-size:12px;letter-spacing:-0.4px">SVs Received</div>
<div class="t" style="left:-66px;width:200px;text-align:right;top:102.10000000000002px;font-size:12px;color:#000;letter-spacing:-0.4px">0</div>
<div class="t" style="left:253px;width:200px;text-align:right;top:102.10000000000002px;font-size:12px;color:#000;letter-spacing:-0.4px">0</div>
</div>
<div class="ab" style="left:476px;top:536px;width:19px;height:146px;background:#f0f0f0;border-left:1px solid #e6e6e6"></div>
<svg class="ab" style="left:476px;top:536px" width="19" height="146"><path d="M5 11 L9 7 L13 11 Z" fill="#333"/><path d="M5 120 L9 124 L13 120 Z" fill="#333"/></svg>
<div class="ab" style="left:478px;top:561px;width:14px;height:15px;background:linear-gradient(90deg,#f6f6f6,#e4e4e4);border:1px solid #9a9a9a;border-radius:2px"></div>
<div class="ab" style="left:11px;top:664px;width:465px;height:18px;background:#f0f0f0"></div>
<div class="ab" style="left:476px;top:664px;width:19px;height:18px;background:#f0f0f0"></div>
<svg class="ab" style="left:11px;top:664px" width="465" height="18"><path d="M10 9 L14 5 L14 13 Z" fill="#555"/><path d="M456 9 L452 5 L452 13 Z" fill="#555"/></svg>
<div class="ab" style="left:30px;top:666px;width:265px;height:14px;background:linear-gradient(#f4f4f4,#e6e6e6 50%,#d8d8d8 51%,#d0d0d0);border:1px solid #979797;border-radius:3px"></div>
<div class="ab" style="left:158px;top:671px;width:1px;height:5px;background:#555"></div>
<div class="ab" style="left:161px;top:671px;width:1px;height:5px;background:#555"></div>
<div class="ab" style="left:164px;top:671px;width:1px;height:5px;background:#555"></div>
<div class="ab" style="left:9px;top:682px;width:486px;height:26px;background:#f0f0f0"></div>
<svg class="ab" style="left:12px;top:688px" width="16" height="16"><text x="1" y="7" style="font:bold 8px Liberation Mono;fill:#0000ff">A</text><text x="1" y="15" style="font:bold 8px Liberation Mono;fill:#ff0000">Z</text><path d="M11 2 V13 M8 10 L11 14 L14 10" stroke="#000" stroke-width="1.6" fill="none"/></svg>
<div class="ab" style="left:33px;top:686px;width:1px;height:20px;background:#c8c8c8"></div>
<div class="ab" style="left:39px;top:686px;width:196px;height:20px;background:#fff;border-top:2px solid #7a7a7a;border-left:2px solid #7a7a7a;border-bottom:1px solid #e0e0e0;border-right:1px solid #e0e0e0"></div>
<div class="ab" style="left:239px;top:686px;width:1px;height:20px;background:#c8c8c8"></div>
<svg class="ab" style="left:245px;top:688px" width="40" height="16"><path d="M5 1 H11 V7 H15 L8 14 L1 7 H5 Z" fill="#9a9a9a"/><path d="M28 14 H34 V8 H38 L31 1 L24 8 H28 Z" fill="#9a9a9a"/></svg>
<div class="ab" style="left:289px;top:686px;width:1px;height:20px;background:#c8c8c8"></div>
<div class="ab" style="left:392px;top:688px;width:1px;height:3px;background:#999"></div>
<div class="ab" style="left:504px;top:102px;width:300px;height:615px;background:#f0f0f0"></div>
<svg class="ab" style="left:504px;top:102px" width="300" height="615" viewBox="504 102 300 615" shape-rendering="crispEdges">
<rect x="504" y="102" width="300" height="615" fill="#f0f0f0"/>
<rect x="504" y="101" width="300" height="1" fill="#a0a0a0"/><rect x="504" y="102" width="300" height="1" fill="#fff"/>
<rect x="504" y="102" width="1" height="615" fill="#fff"/>
<rect x="803" y="102" width="1" height="615" fill="#a0a0a0"/>
<rect x="504" y="716" width="300" height="1" fill="#a0a0a0"/>
<rect x="509" y="108" width="277" height="1" fill="#fff"/><rect x="509" y="109" width="277" height="1" fill="#a0a0a0"/>
<rect x="509" y="111" width="277" height="1" fill="#fff"/><rect x="509" y="112" width="277" height="1" fill="#a0a0a0"/>
<rect x="785" y="107" width="1" height="6" fill="#a0a0a0"/>
<path d="M791 108 L797 114 M797 108 L791 114" stroke="#000" stroke-width="2"/>
<rect x="508" y="118" width="291" height="594" fill="#fff"/>
<rect x="508" y="118" width="290" height="593" fill="#a0a0a0"/>
<rect x="509" y="119" width="289" height="592" fill="#696969"/>
<rect x="510" y="120" width="288" height="591" fill="#000"/>
<circle cx="654.5" cy="415" r="130" fill="none" stroke="#d0d0d0" stroke-width="1" shape-rendering="auto"/>
<circle cx="654.5" cy="415" r="64.5" fill="none" stroke="#d0d0d0" stroke-width="1" shape-rendering="auto"/>
<rect x="648" y="278" width="12" height="12" fill="#000"/>
<text x="654" y="289" text-anchor="middle" style="font-family:Liberation Sans;font-size:12px;fill:#d8d8d8">N</text>
<rect x="648" y="538" width="12" height="12" fill="#000"/>
<text x="654" y="549" text-anchor="middle" style="font-family:Liberation Sans;font-size:12px;fill:#d8d8d8">S</text>
<rect x="517" y="408" width="12" height="12" fill="#000"/>
<text x="523" y="419" text-anchor="middle" style="font-family:Liberation Sans;font-size:12px;fill:#d8d8d8">W</text>
<rect x="777" y="408" width="12" height="12" fill="#000"/>
<text x="783" y="419" text-anchor="middle" style="font-family:Liberation Sans;font-size:12px;fill:#d8d8d8">E</text>
<g fill="#c00000">
<ellipse cx="622" cy="295" rx="14.5" ry="8.5" shape-rendering="auto"/>
<rect x="601" y="284" width="3" height="21"/><rect x="640" y="284" width="3" height="21"/>
<rect x="603" y="293" width="38" height="3"/>
</g>
<rect x="613" y="278" width="18" height="3" fill="#fff"/><rect x="613" y="281" width="18" height="3" fill="#0000ff"/><rect x="613" y="284" width="18" height="3" fill="#ff0000"/>
<text x="622" y="300.5" text-anchor="middle" style="font-family:Liberation Sans;font-size:16px;fill:#f0f0f0;letter-spacing:-0.6px">R20</text>
<g fill="#c00000">
<ellipse cx="715" cy="312" rx="14.5" ry="8.5" shape-rendering="auto"/>
<rect x="694" y="301" width="3" height="21"/><rect x="733" y="301" width="3" height="21"/>
<rect x="696" y="310" width="38" height="3"/>
</g>
<rect x="706" y="295" width="18" height="10" fill="#fff"/>
<rect x="706" y="296" width="18" height="1" fill="#ff0000"/>
<rect x="706" y="298" width="18" height="1" fill="#ff0000"/>
<rect x="706" y="300" width="18" height="1" fill="#ff0000"/>
<rect x="706" y="302" width="18" height="1" fill="#ff0000"/>
<rect x="706" y="304" width="18" height="1" fill="#ff0000"/>
<rect x="706" y="296" width="9" height="5" fill="#0000ff"/>
<text x="715" y="317.5" text-anchor="middle" style="font-family:Liberation Sans;font-size:16px;fill:#f0f0f0;letter-spacing:-0.6px">G19</text>
<g fill="#00c000">
<ellipse cx="710" cy="318" rx="14.5" ry="8.5" shape-rendering="auto"/>
<rect x="689" y="307" width="3" height="21"/><rect x="728" y="307" width="3" height="21"/>
<rect x="691" y="316" width="38" height="3"/>
</g>
<rect x="701" y="301" width="18" height="3" fill="#fff"/><rect x="701" y="304" width="18" height="3" fill="#0000ff"/><rect x="701" y="307" width="18" height="3" fill="#ff0000"/>
<text x="710" y="323.5" text-anchor="middle" style="font-family:Liberation Sans;font-size:16px;fill:#f0f0f0;letter-spacing:-0.6px">R21</text>
<g fill="#c00000">
<ellipse cx="565" cy="335" rx="14.5" ry="8.5" shape-rendering="auto"/>
<rect x="544" y="324" width="3" height="21"/><rect x="583" y="324" width="3" height="21"/>
<rect x="546" y="333" width="38" height="3"/>
</g>
<rect x="556" y="318" width="18" height="10" fill="#fff"/>
<rect x="556" y="319" width="18" height="1" fill="#ff0000"/>
<rect x="556" y="321" width="18" height="1" fill="#ff0000"/>
<rect x="556" y="323" width="18" height="1" fill="#ff0000"/>
<rect x="556" y="325" width="18" height="1" fill="#ff0000"/>
<rect x="556" y="327" width="18" height="1" fill="#ff0000"/>
<rect x="556" y="319" width="9" height="5" fill="#0000ff"/>
<text x="565" y="340.5" text-anchor="middle" style="font-family:Liberation Sans;font-size:16px;fill:#f0f0f0;letter-spacing:-0.6px">G21</text>
<g fill="#00c000">
<ellipse cx="601" cy="345" rx="14.5" ry="8.5" shape-rendering="auto"/>
<rect x="580" y="334" width="3" height="21"/><rect x="619" y="334" width="3" height="21"/>
<rect x="582" y="343" width="38" height="3"/>
</g>
<rect x="592" y="328" width="18" height="3" fill="#fff"/><rect x="592" y="331" width="18" height="3" fill="#0000ff"/><rect x="592" y="334" width="18" height="3" fill="#ff0000"/>
<text x="601" y="350.5" text-anchor="middle" style="font-family:Liberation Sans;font-size:16px;fill:#f0f0f0;letter-spacing:-0.6px">R4</text>
<g fill="#00c000">
<ellipse cx="582" cy="375" rx="14.5" ry="8.5" shape-rendering="auto"/>
<rect x="561" y="364" width="3" height="21"/><rect x="600" y="364" width="3" height="21"/>
<rect x="563" y="373" width="38" height="3"/>
</g>
<rect x="573" y="358" width="18" height="10" fill="#fff"/>
<rect x="573" y="359" width="18" height="1" fill="#ff0000"/>
<rect x="573" y="361" width="18" height="1" fill="#ff0000"/>
<rect x="573" y="363" width="18" height="1" fill="#ff0000"/>
<rect x="573" y="365" width="18" height="1" fill="#ff0000"/>
<rect x="573" y="367" width="18" height="1" fill="#ff0000"/>
<rect x="573" y="359" width="9" height="5" fill="#0000ff"/>
<text x="582" y="380.5" text-anchor="middle" style="font-family:Liberation Sans;font-size:16px;fill:#f0f0f0;letter-spacing:-0.6px">G15</text>
<g fill="#00c000">
<ellipse cx="716" cy="385" rx="14.5" ry="8.5" shape-rendering="auto"/>
<rect x="695" y="374" width="3" height="21"/><rect x="734" y="374" width="3" height="21"/>
<rect x="697" y="383" width="38" height="3"/>
</g>
<rect x="707" y="368" width="18" height="10" fill="#fff"/>
<rect x="707" y="369" width="18" height="1" fill="#ff0000"/>
<rect x="707" y="371" width="18" height="1" fill="#ff0000"/>
<rect x="707" y="373" width="18" height="1" fill="#ff0000"/>
<rect x="707" y="375" width="18" height="1" fill="#ff0000"/>
<rect x="707" y="377" width="18" height="1" fill="#ff0000"/>
<rect x="707" y="369" width="9" height="5" fill="#0000ff"/>
<text x="716" y="390.5" text-anchor="middle" style="font-family:Liberation Sans;font-size:16px;fill:#f0f0f0;letter-spacing:-0.6px">G30</text>
<g fill="#00c000">
<ellipse cx="700" cy="365" rx="14.5" ry="8.5" shape-rendering="auto"/>
<rect x="679" y="354" width="3" height="21"/><rect x="718" y="354" width="3" height="21"/>
<rect x="681" y="363" width="38" height="3"/>
</g>
<rect x="691" y="348" width="18" height="3" fill="#fff"/><rect x="691" y="351" width="18" height="3" fill="#0000ff"/><rect x="691" y="354" width="18" height="3" fill="#ff0000"/>
<text x="700" y="370.5" text-anchor="middle" style="font-family:Liberation Sans;font-size:16px;fill:#f0f0f0;letter-spacing:-0.6px">R12</text>
<g fill="#0000c0">
<ellipse cx="756" cy="373" rx="14.5" ry="8.5" shape-rendering="auto"/>
<rect x="735" y="362" width="3" height="21"/><rect x="774" y="362" width="3" height="21"/>
<rect x="737" y="371" width="38" height="3"/>
</g>
<rect x="747" y="356" width="18" height="10" fill="#fff"/>
<rect x="747" y="357" width="18" height="1" fill="#ff0000"/>
<rect x="747" y="359" width="18" height="1" fill="#ff0000"/>
<rect x="747" y="361" width="18" height="1" fill="#ff0000"/>
<rect x="747" y="363" width="18" height="1" fill="#ff0000"/>
<rect x="747" y="365" width="18" height="1" fill="#ff0000"/>
<rect x="747" y="357" width="9" height="5" fill="#0000ff"/>
<text x="756" y="378.5" text-anchor="middle" style="font-family:Liberation Sans;font-size:16px;fill:#f0f0f0;letter-spacing:-0.6px">G7</text>
<g fill="#c00000">
<ellipse cx="771" cy="389" rx="14.5" ry="8.5" shape-rendering="auto"/>
<rect x="750" y="378" width="3" height="21"/><rect x="789" y="378" width="3" height="21"/>
<rect x="752" y="387" width="38" height="3"/>
</g>
<rect x="762" y="372" width="18" height="3" fill="#fff"/><rect x="762" y="375" width="18" height="3" fill="#0000ff"/><rect x="762" y="378" width="18" height="3" fill="#ff0000"/>
<text x="771" y="394.5" text-anchor="middle" style="font-family:Liberation Sans;font-size:16px;fill:#f0f0f0;letter-spacing:-0.6px">R22</text>
<g fill="#00c000">
<ellipse cx="634" cy="399" rx="14.5" ry="8.5" shape-rendering="auto"/>
<rect x="613" y="388" width="3" height="21"/><rect x="652" y="388" width="3" height="21"/>
<rect x="615" y="397" width="38" height="3"/>
</g>
<rect x="625" y="382" width="18" height="10" fill="#fff"/>
<rect x="625" y="383" width="18" height="1" fill="#ff0000"/>
<rect x="625" y="385" width="18" height="1" fill="#ff0000"/>
<rect x="625" y="387" width="18" height="1" fill="#ff0000"/>
<rect x="625" y="389" width="18" height="1" fill="#ff0000"/>
<rect x="625" y="391" width="18" height="1" fill="#ff0000"/>
<rect x="625" y="383" width="9" height="5" fill="#0000ff"/>
<text x="634" y="404.5" text-anchor="middle" style="font-family:Liberation Sans;font-size:16px;fill:#f0f0f0;letter-spacing:-0.6px">G13</text>
<g fill="#00c000">
<ellipse cx="634" cy="421" rx="14.5" ry="8.5" shape-rendering="auto"/>
<rect x="613" y="410" width="3" height="21"/><rect x="652" y="410" width="3" height="21"/>
<rect x="615" y="419" width="38" height="3"/>
</g>
<rect x="625" y="404" width="18" height="3" fill="#fff"/><rect x="625" y="407" width="18" height="3" fill="#0000ff"/><rect x="625" y="410" width="18" height="3" fill="#ff0000"/>
<text x="634" y="426.5" text-anchor="middle" style="font-family:Liberation Sans;font-size:16px;fill:#f0f0f0;letter-spacing:-0.6px">R3</text>
<g fill="#c00000">
<ellipse cx="630" cy="415" rx="14.5" ry="8.5" shape-rendering="auto"/>
<rect x="609" y="404" width="3" height="21"/><rect x="648" y="404" width="3" height="21"/>
<rect x="611" y="413" width="38" height="3"/>
</g>
<rect x="621" y="398" width="18" height="3" fill="#fff"/><rect x="621" y="401" width="18" height="3" fill="#0000ff"/><rect x="621" y="404" width="18" height="3" fill="#ff0000"/>
<text x="630" y="420.5" text-anchor="middle" style="font-family:Liberation Sans;font-size:16px;fill:#f0f0f0;letter-spacing:-0.6px">R13</text>
<g fill="#00c000">
<ellipse cx="693" cy="431" rx="14.5" ry="8.5" shape-rendering="auto"/>
<rect x="672" y="420" width="3" height="21"/><rect x="711" y="420" width="3" height="21"/>
<rect x="674" y="429" width="38" height="3"/>
</g>
<rect x="684" y="414" width="18" height="10" fill="#fff"/>
<rect x="684" y="415" width="18" height="1" fill="#ff0000"/>
<rect x="684" y="417" width="18" height="1" fill="#ff0000"/>
<rect x="684" y="419" width="18" height="1" fill="#ff0000"/>
<rect x="684" y="421" width="18" height="1" fill="#ff0000"/>
<rect x="684" y="423" width="18" height="1" fill="#ff0000"/>
<rect x="684" y="415" width="9" height="5" fill="#0000ff"/>
<text x="693" y="436.5" text-anchor="middle" style="font-family:Liberation Sans;font-size:16px;fill:#f0f0f0;letter-spacing:-0.6px">G28</text>
<g fill="#c00000">
<ellipse cx="532" cy="454" rx="14.5" ry="8.5" shape-rendering="auto"/>
<rect x="511" y="443" width="3" height="21"/><rect x="550" y="443" width="3" height="21"/>
<rect x="513" y="452" width="38" height="3"/>
</g>
<rect x="523" y="437" width="18" height="10" fill="#fff"/>
<rect x="523" y="438" width="18" height="1" fill="#ff0000"/>
<rect x="523" y="440" width="18" height="1" fill="#ff0000"/>
<rect x="523" y="442" width="18" height="1" fill="#ff0000"/>
<rect x="523" y="444" width="18" height="1" fill="#ff0000"/>
<rect x="523" y="446" width="18" height="1" fill="#ff0000"/>
<rect x="523" y="438" width="9" height="5" fill="#0000ff"/>
<text x="532" y="459.5" text-anchor="middle" style="font-family:Liberation Sans;font-size:16px;fill:#f0f0f0;letter-spacing:-0.6px">G24</text>
<g fill="#c00000">
<ellipse cx="570" cy="470" rx="14.5" ry="8.5" shape-rendering="auto"/>
<rect x="549" y="459" width="3" height="21"/><rect x="588" y="459" width="3" height="21"/>
<rect x="551" y="468" width="38" height="3"/>
</g>
<rect x="561" y="453" width="18" height="3" fill="#fff"/><rect x="561" y="456" width="18" height="3" fill="#0000ff"/><rect x="561" y="459" width="18" height="3" fill="#ff0000"/>
<text x="570" y="475.5" text-anchor="middle" style="font-family:Liberation Sans;font-size:16px;fill:#f0f0f0;letter-spacing:-0.6px">R14</text>
<g fill="#00c000">
<ellipse cx="620" cy="473" rx="14.5" ry="8.5" shape-rendering="auto"/>
<rect x="599" y="462" width="3" height="21"/><rect x="638" y="462" width="3" height="21"/>
<rect x="601" y="471" width="38" height="3"/>
</g>
<rect x="611" y="456" width="18" height="10" fill="#fff"/>
<rect x="611" y="457" width="18" height="1" fill="#ff0000"/>
<rect x="611" y="459" width="18" height="1" fill="#ff0000"/>
<rect x="611" y="461" width="18" height="1" fill="#ff0000"/>
<rect x="611" y="463" width="18" height="1" fill="#ff0000"/>
<rect x="611" y="465" width="18" height="1" fill="#ff0000"/>
<rect x="611" y="457" width="9" height="5" fill="#0000ff"/>
<text x="620" y="478.5" text-anchor="middle" style="font-family:Liberation Sans;font-size:16px;fill:#f0f0f0;letter-spacing:-0.6px">G5</text>
<g fill="#c00000">
<ellipse cx="605" cy="488" rx="14.5" ry="8.5" shape-rendering="auto"/>
<rect x="584" y="477" width="3" height="21"/><rect x="623" y="477" width="3" height="21"/>
<rect x="586" y="486" width="38" height="3"/>
</g>
<text x="605" y="493.5" text-anchor="middle" style="font-family:Liberation Sans;font-size:16px;fill:#f0f0f0;letter-spacing:-0.6px">S120</text>
<g fill="#00c000">
<ellipse cx="673" cy="496" rx="14.5" ry="8.5" shape-rendering="auto"/>
<rect x="652" y="485" width="3" height="21"/><rect x="691" y="485" width="3" height="21"/>
<rect x="654" y="494" width="38" height="3"/>
</g>
<rect x="664" y="479" width="18" height="3" fill="#fff"/><rect x="664" y="482" width="18" height="3" fill="#0000ff"/><rect x="664" y="485" width="18" height="3" fill="#ff0000"/>
<text x="673" y="501.5" text-anchor="middle" style="font-family:Liberation Sans;font-size:16px;fill:#f0f0f0;letter-spacing:-0.6px">R2</text>
<g fill="#c00000">
<ellipse cx="679" cy="493" rx="14.5" ry="8.5" shape-rendering="auto"/>
<rect x="658" y="482" width="3" height="21"/><rect x="697" y="482" width="3" height="21"/>
<rect x="660" y="491" width="38" height="3"/>
</g>
<text x="679" y="498.5" text-anchor="middle" style="font-family:Liberation Sans;font-size:16px;fill:#f0f0f0;letter-spacing:-0.6px">S126</text>
<g fill="#c00000">
<ellipse cx="742" cy="513" rx="14.5" ry="8.5" shape-rendering="auto"/>
<rect x="721" y="502" width="3" height="21"/><rect x="760" y="502" width="3" height="21"/>
<rect x="723" y="511" width="38" height="3"/>
</g>
<rect x="733" y="496" width="18" height="10" fill="#fff"/>
<rect x="733" y="497" width="18" height="1" fill="#ff0000"/>
<rect x="733" y="499" width="18" height="1" fill="#ff0000"/>
<rect x="733" y="501" width="18" height="1" fill="#ff0000"/>
<rect x="733" y="503" width="18" height="1" fill="#ff0000"/>
<rect x="733" y="505" width="18" height="1" fill="#ff0000"/>
<rect x="733" y="497" width="9" height="5" fill="#0000ff"/>
<text x="742" y="518.5" text-anchor="middle" style="font-family:Liberation Sans;font-size:16px;fill:#f0f0f0;letter-spacing:-0.6px">G17</text>
<g fill="#0000c0">
<ellipse cx="681" cy="539" rx="14.5" ry="8.5" shape-rendering="auto"/>
<rect x="660" y="528" width="3" height="21"/><rect x="699" y="528" width="3" height="21"/>
<rect x="662" y="537" width="38" height="3"/>
</g>
<rect x="672" y="522" width="18" height="10" fill="#fff"/>
<rect x="672" y="523" width="18" height="1" fill="#ff0000"/>
<rect x="672" y="525" width="18" height="1" fill="#ff0000"/>
<rect x="672" y="527" width="18" height="1" fill="#ff0000"/>
<rect x="672" y="529" width="18" height="1" fill="#ff0000"/>
<rect x="672" y="531" width="18" height="1" fill="#ff0000"/>
<rect x="672" y="523" width="9" height="5" fill="#0000ff"/>
<text x="681" y="544.5" text-anchor="middle" style="font-family:Liberation Sans;font-size:16px;fill:#f0f0f0;letter-spacing:-0.6px">G10</text>
</svg>
<div class="ab" style="left:804px;top:102px;width:560px;height:615px;background:#f0f0f0"></div>
<svg class="ab" style="left:804px;top:101px" width="560" height="616" viewBox="804 101 560 616" shape-rendering="crispEdges">
<rect x="804" y="101" width="560" height="616" fill="#f0f0f0"/>
<rect x="804" y="101" width="560" height="1" fill="#a0a0a0"/><rect x="804" y="102" width="560" height="1" fill="#fff"/>
<rect x="804" y="102" width="1" height="615" fill="#fff"/>
<rect x="804" y="716" width="560" height="1" fill="#a0a0a0"/>
<rect x="809" y="108" width="538" height="1" fill="#fff"/><rect x="809" y="109" width="538" height="1" fill="#a0a0a0"/>
<rect x="809" y="111" width="538" height="1" fill="#fff"/><rect x="809" y="112" width="538" height="1" fill="#a0a0a0"/>
<rect x="1347" y="107" width="1" height="6" fill="#a0a0a0"/>
<path d="M1353 108 L1359 114 M1359 108 L1353 114" stroke="#000" stroke-width="2"/>
<rect x="804" y="533" width="560" height="1" fill="#a0a0a0"/><rect x="804" y="534" width="560" height="1" fill="#fff"/>
<rect x="808" y="118" width="554" height="411" fill="#fff"/>
<rect x="808" y="118" width="553" height="410" fill="#a0a0a0"/>
<rect x="809" y="119" width="552" height="409" fill="#696969"/>
<rect x="810" y="120" width="550" height="408" fill="#000"/>
<line x1="811" y1="474.5" x2="1345" y2="474.5" stroke="#d0d0d0" stroke-width="1" stroke-dasharray="3 3"/>
<line x1="811" y1="396.5" x2="1345" y2="396.5" stroke="#d0d0d0" stroke-width="1" stroke-dasharray="3 3"/>
<line x1="811" y1="318.5" x2="1345" y2="318.5" stroke="#d0d0d0" stroke-width="1" stroke-dasharray="3 3"/>
<line x1="811" y1="239.5" x2="1345" y2="239.5" stroke="#d0d0d0" stroke-width="1" stroke-dasharray="3 3"/>
<line x1="811" y1="161.5" x2="1345" y2="161.5" stroke="#d0d0d0" stroke-width="1" stroke-dasharray="3 3"/>
<rect x="811" y="426" width="19" height="86" fill="#00c000"/>
<rect x="811" y="418" width="19" height="1" fill="#d8d8d8"/>
<rect x="811" y="442" width="19" height="1" fill="#d8d8d8"/>
<text x="821.0" y="510" text-anchor="middle" style="font-family:Liberation Sans;font-size:12px;fill:#000;letter-spacing:-0.3px">16</text>
<rect x="850" y="442" width="20" height="1" fill="#d8d8d8"/>
<rect x="870" y="412" width="20" height="100" fill="#00c000"/>
<rect x="870" y="396" width="20" height="1" fill="#d8d8d8"/>
<text x="880.5" y="510" text-anchor="middle" style="font-family:Liberation Sans;font-size:12px;fill:#000;letter-spacing:-0.3px">18</text>
<rect x="910" y="458" width="19" height="1" fill="#d8d8d8"/>
<rect x="929" y="427" width="20" height="85" fill="#00c000"/>
<rect x="929" y="403" width="20" height="1" fill="#d8d8d8"/>
<text x="939.5" y="510" text-anchor="middle" style="font-family:Liberation Sans;font-size:12px;fill:#000;letter-spacing:-0.3px">16</text>
<rect x="949" y="388" width="20" height="124" fill="#00c000"/>
<rect x="949" y="380" width="20" height="1" fill="#d8d8d8"/>
<text x="959.5" y="510" text-anchor="middle" style="font-family:Liberation Sans;font-size:12px;fill:#000;letter-spacing:-0.3px">21</text>
<rect x="969" y="474" width="20" height="38" fill="#00c000"/>
<rect x="969" y="474" width="20" height="1" fill="#d8d8d8"/>
<text x="979.5" y="510" text-anchor="middle" style="font-family:Liberation Sans;font-size:12px;fill:#000;letter-spacing:-0.3px">10</text>
<rect x="989" y="356" width="20" height="156" fill="#00c000"/>
<rect x="989" y="356" width="20" height="1" fill="#d8d8d8"/>
<rect x="989" y="365" width="20" height="1" fill="#d8d8d8"/>
<text x="999.5" y="510" text-anchor="middle" style="font-family:Liberation Sans;font-size:12px;fill:#000;letter-spacing:-0.3px">25</text>
<rect x="1009" y="418" width="19" height="94" fill="#00c000"/>
<rect x="1009" y="418" width="19" height="1" fill="#d8d8d8"/>
<rect x="1009" y="434" width="19" height="1" fill="#d8d8d8"/>
<text x="1019.0" y="510" text-anchor="middle" style="font-family:Liberation Sans;font-size:12px;fill:#000;letter-spacing:-0.3px">17</text>
<rect x="1048" y="411" width="20" height="101" fill="#00c000"/>
<rect x="1048" y="403" width="20" height="1" fill="#d8d8d8"/>
<rect x="1048" y="434" width="20" height="1" fill="#d8d8d8"/>
<text x="1058.5" y="510" text-anchor="middle" style="font-family:Liberation Sans;font-size:12px;fill:#000;letter-spacing:-0.3px">18</text>
<rect x="1127" y="418" width="20" height="94" fill="#00c000"/>
<rect x="1127" y="411" width="20" height="1" fill="#d8d8d8"/>
<rect x="1127" y="489" width="20" height="1" fill="#d8d8d8"/>
<text x="1137.5" y="510" text-anchor="middle" style="font-family:Liberation Sans;font-size:12px;fill:#000;letter-spacing:-0.3px">17</text>
<rect x="1187" y="396" width="19" height="116" fill="#00c000"/>
<rect x="1187" y="379" width="19" height="1" fill="#d8d8d8"/>
<text x="1197.0" y="510" text-anchor="middle" style="font-family:Liberation Sans;font-size:12px;fill:#000;letter-spacing:-0.3px">20</text>
<rect x="1206" y="489" width="20" height="23" fill="#0000c0"/>
<rect x="1206" y="458" width="20" height="1" fill="#d8d8d8"/>
<text x="1216.5" y="510" text-anchor="middle" style="font-family:Liberation Sans;font-size:12px;fill:#000;letter-spacing:-0.3px">8</text>
<rect x="1226" y="426" width="20" height="1" fill="#d8d8d8"/>
<rect x="1325" y="403" width="20" height="109" fill="#00c000"/>
<rect x="1325" y="387" width="20" height="1" fill="#d8d8d8"/>
<text x="1335.5" y="510" text-anchor="middle" style="font-family:Liberation Sans;font-size:12px;fill:#000;letter-spacing:-0.3px">19</text>
<rect x="811" y="121" width="1" height="392" fill="#d8d8d8"/>
<rect x="830" y="121" width="1" height="392" fill="#d8d8d8"/>
<rect x="850" y="121" width="1" height="392" fill="#d8d8d8"/>
<rect x="870" y="121" width="1" height="392" fill="#d8d8d8"/>
<rect x="890" y="121" width="1" height="392" fill="#d8d8d8"/>
<rect x="910" y="121" width="1" height="392" fill="#d8d8d8"/>
<rect x="929" y="121" width="1" height="392" fill="#d8d8d8"/>
<rect x="949" y="121" width="1" height="392" fill="#d8d8d8"/>
<rect x="969" y="121" width="1" height="392" fill="#d8d8d8"/>
<rect x="989" y="121" width="1" height="392" fill="#d8d8d8"/>
<rect x="1009" y="121" width="1" height="392" fill="#d8d8d8"/>
<rect x="1028" y="121" width="1" height="392" fill="#d8d8d8"/>
<rect x="1048" y="121" width="1" height="392" fill="#d8d8d8"/>
<rect x="1068" y="121" width="1" height="392" fill="#d8d8d8"/>
<rect x="1088" y="121" width="1" height="392" fill="#d8d8d8"/>
<rect x="1107" y="121" width="1" height="392" fill="#d8d8d8"/>
<rect x="1127" y="121" width="1" height="392" fill="#d8d8d8"/>
<rect x="1147" y="121" width="1" height="392" fill="#d8d8d8"/>
<rect x="1167" y="121" width="1" height="392" fill="#d8d8d8"/>
<rect x="1187" y="121" width="1" height="392" fill="#d8d8d8"/>
<rect x="1206" y="121" width="1" height="392" fill="#d8d8d8"/>
<rect x="1226" y="121" width="1" height="392" fill="#d8d8d8"/>
<rect x="1246" y="121" width="1" height="392" fill="#d8d8d8"/>
<rect x="1266" y="121" width="1" height="392" fill="#d8d8d8"/>
<rect x="1285" y="121" width="1" height="392" fill="#d8d8d8"/>
<rect x="1305" y="121" width="1" height="392" fill="#d8d8d8"/>
<rect x="1325" y="121" width="1" height="392" fill="#d8d8d8"/>
<rect x="1345" y="121" width="1" height="392" fill="#d8d8d8"/>
<rect x="811" y="121" width="535" height="1" fill="#d8d8d8"/>
<rect x="811" y="512" width="535" height="1" fill="#d8d8d8"/>
<text x="821.0" y="524" text-anchor="middle" style="font-family:Liberation Sans;font-size:12px;fill:#e0e0e0;letter-spacing:-0.4px">R21</text>
<text x="840.5" y="524" text-anchor="middle" style="font-family:Liberation Sans;font-size:12px;fill:#e0e0e0;letter-spacing:-0.4px">R22</text>
<text x="860.5" y="524" text-anchor="middle" style="font-family:Liberation Sans;font-size:12px;fill:#e0e0e0;letter-spacing:-0.4px">G21</text>
<text x="880.5" y="524" text-anchor="middle" style="font-family:Liberation Sans;font-size:12px;fill:#e0e0e0;letter-spacing:-0.4px">G28</text>
<text x="900.5" y="524" text-anchor="middle" style="font-family:Liberation Sans;font-size:12px;fill:#e0e0e0;letter-spacing:-0.4px">G24</text>
<text x="920.0" y="524" text-anchor="middle" style="font-family:Liberation Sans;font-size:12px;fill:#e0e0e0;letter-spacing:-0.4px">G19</text>
<text x="939.5" y="524" text-anchor="middle" style="font-family:Liberation Sans;font-size:12px;fill:#e0e0e0;letter-spacing:-0.4px">G13</text>
<text x="959.5" y="524" text-anchor="middle" style="font-family:Liberation Sans;font-size:12px;fill:#e0e0e0;letter-spacing:-0.4px">G15</text>
<text x="979.5" y="524" text-anchor="middle" style="font-family:Liberation Sans;font-size:12px;fill:#e0e0e0;letter-spacing:-0.4px">G10</text>
<text x="999.5" y="524" text-anchor="middle" style="font-family:Liberation Sans;font-size:12px;fill:#e0e0e0;letter-spacing:-0.4px">G5</text>
<text x="1019.0" y="524" text-anchor="middle" style="font-family:Liberation Sans;font-size:12px;fill:#e0e0e0;letter-spacing:-0.4px">R12</text>
<text x="1038.5" y="524" text-anchor="middle" style="font-family:Liberation Sans;font-size:12px;fill:#e0e0e0;letter-spacing:-0.4px">G17</text>
<text x="1058.5" y="524" text-anchor="middle" style="font-family:Liberation Sans;font-size:12px;fill:#e0e0e0;letter-spacing:-0.4px">R3</text>
<text x="1078.5" y="524" text-anchor="middle" style="font-family:Liberation Sans;font-size:12px;fill:#e0e0e0;letter-spacing:-0.4px">R13</text>
<text x="1137.5" y="524" text-anchor="middle" style="font-family:Liberation Sans;font-size:12px;fill:#e0e0e0;letter-spacing:-0.4px">R4</text>
<text x="1157.5" y="524" text-anchor="middle" style="font-family:Liberation Sans;font-size:12px;fill:#e0e0e0;letter-spacing:-0.4px">R20</text>
<text x="1197.0" y="524" text-anchor="middle" style="font-family:Liberation Sans;font-size:12px;fill:#e0e0e0;letter-spacing:-0.4px">R2</text>
<text x="1216.5" y="524" text-anchor="middle" style="font-family:Liberation Sans;font-size:12px;fill:#e0e0e0;letter-spacing:-0.4px">G7</text>
<text x="1236.5" y="524" text-anchor="middle" style="font-family:Liberation Sans;font-size:12px;fill:#e0e0e0;letter-spacing:-0.4px">R14</text>
<text x="1256.5" y="524" text-anchor="middle" style="font-family:Liberation Sans;font-size:12px;fill:#e0e0e0;letter-spacing:-0.4px">S120</text>
<text x="1276.0" y="524" text-anchor="middle" style="font-family:Liberation Sans;font-size:12px;fill:#e0e0e0;letter-spacing:-0.4px">S126</text>
<text x="1335.5" y="524" text-anchor="middle" style="font-family:Liberation Sans;font-size:12px;fill:#e0e0e0;letter-spacing:-0.4px">G30</text>
<text x="1347" y="525" style="font-family:Liberation Sans;font-size:10.5px;fill:#e0e0e0;letter-spacing:-0.3px">dB</text>
<text x="1347" y="479" style="font-family:Liberation Sans;font-size:12px;fill:#e0e0e0;letter-spacing:-0.4px">10</text>
<text x="1347" y="401" style="font-family:Liberation Sans;font-size:12px;fill:#e0e0e0;letter-spacing:-0.4px">20</text>
<text x="1347" y="323" style="font-family:Liberation Sans;font-size:12px;fill:#e0e0e0;letter-spacing:-0.4px">30</text>
<text x="1347" y="244" style="font-family:Liberation Sans;font-size:12px;fill:#e0e0e0;letter-spacing:-0.4px">40</text>
<text x="1347" y="166" style="font-family:Liberation Sans;font-size:12px;fill:#e0e0e0;letter-spacing:-0.4px">50</text>
</svg>
<svg class="ab" style="left:804px;top:535px" width="560" height="182" viewBox="804 535 560 182" shape-rendering="crispEdges">
<rect x="804" y="535" width="560" height="182" fill="#f0f0f0"/>
<rect x="804" y="535" width="1" height="182" fill="#fff"/>
<rect x="809" y="540" width="538" height="1" fill="#fff"/><rect x="809" y="541" width="538" height="1" fill="#a0a0a0"/>
<rect x="809" y="543" width="538" height="1" fill="#fff"/><rect x="809" y="544" width="538" height="1" fill="#a0a0a0"/>
<rect x="1347" y="539" width="1" height="6" fill="#a0a0a0"/>
<path d="M1353 540 L1359 546 M1359 540 L1353 546" stroke="#000" stroke-width="2"/>
<rect x="804" y="716" width="560" height="1" fill="#a0a0a0"/>
<rect x="808" y="550" width="554" height="163" fill="#fff"/>
<rect x="808" y="550" width="553" height="162" fill="#a0a0a0"/>
<rect x="809" y="551" width="552" height="161" fill="#696969"/>
<rect x="810" y="552" width="550" height="159" fill="#000"/>
<text x="815" y="568" style="font-family:Liberation Sans;font-size:12px;fill:#e8e8e8;letter-spacing:-0.6px">Longitude</text>
<rect x="884" y="557" width="471" height="12" fill="#404040"/>
<text x="1355" y="568" text-anchor="end" style="font-family:Liberation Sans;font-size:12px;fill:#e8e8e8;letter-spacing:-0.6px">11.368979 °</text>
<text x="815" y="581" style="font-family:Liberation Sans;font-size:12px;fill:#e8e8e8;letter-spacing:-0.6px">Latitude</text>
<rect x="884" y="570" width="471" height="12" fill="#404040"/>
<text x="1355" y="581" text-anchor="end" style="font-family:Liberation Sans;font-size:12px;fill:#e8e8e8;letter-spacing:-0.6px">47.902203°</text>
<text x="815" y="594" style="font-family:Liberation Sans;font-size:12px;fill:#e8e8e8;letter-spacing:-0.6px">Altitude</text>
<rect x="884" y="583" width="471" height="12" fill="#404040"/>
<text x="1355" y="594" text-anchor="end" style="font-family:Liberation Sans;font-size:12px;fill:#e8e8e8;letter-spacing:-0.6px">713.800 m</text>
<text x="815" y="607" style="font-family:Liberation Sans;font-size:12px;fill:#e8e8e8;letter-spacing:-0.6px">TTFF</text>
<rect x="884" y="596" width="471" height="12" fill="#404040"/>
<text x="815" y="620" style="font-family:Liberation Sans;font-size:12px;fill:#e8e8e8;letter-spacing:-0.6px">Fix Mode</text>
<rect x="884" y="609" width="471" height="12" fill="#404040"/>
<text x="815" y="633" style="font-family:Liberation Sans;font-size:12px;fill:#e8e8e8;letter-spacing:-0.6px">3D Acc.</text>
<rect x="884" y="622" width="471" height="12" fill="#404040"/>
<text x="815" y="646" style="font-family:Liberation Sans;font-size:12px;fill:#e8e8e8;letter-spacing:-0.6px">2D Acc.</text>
<rect x="884" y="635" width="471" height="12" fill="#404040"/>
<text x="815" y="659" style="font-family:Liberation Sans;font-size:12px;fill:#e8e8e8;letter-spacing:-0.6px">PDOP</text>
<rect x="884" y="648" width="471" height="12" fill="#404040"/>
<text x="815" y="672" style="font-family:Liberation Sans;font-size:12px;fill:#e8e8e8;letter-spacing:-0.6px">HDOP</text>
<rect x="884" y="661" width="471" height="12" fill="#404040"/>
<text x="815" y="685" style="font-family:Liberation Sans;font-size:12px;fill:#e8e8e8;letter-spacing:-0.6px">Satellites</text>
<text x="1355" y="620" text-anchor="end" style="font-family:Liberation Sans;font-size:12px;fill:#e8e8e8;letter-spacing:-0.6px;fill:#00ff00">3D</text>
<text x="885" y="659" style="font-family:Liberation Sans;font-size:12px;fill:#e8e8e8;letter-spacing:-0.6px">0</text>
<text x="1355" y="659" text-anchor="end" style="font-family:Liberation Sans;font-size:12px;fill:#e8e8e8;letter-spacing:-0.6px">5</text>
<rect x="1057" y="649" width="3" height="10" fill="#00c000"/>
<text x="1061" y="659" style="font-family:Liberation Sans;font-size:12px;fill:#e8e8e8;letter-spacing:-0.6px">1.9</text>
<text x="885" y="672" style="font-family:Liberation Sans;font-size:12px;fill:#e8e8e8;letter-spacing:-0.6px">0</text>
<text x="1355" y="672" text-anchor="end" style="font-family:Liberation Sans;font-size:12px;fill:#e8e8e8;letter-spacing:-0.6px">5</text>
<rect x="972" y="662" width="3" height="10" fill="#00c000"/>
<text x="976" y="672" style="font-family:Liberation Sans;font-size:12px;fill:#e8e8e8;letter-spacing:-0.6px">0.9</text>
<rect x="884" y="675" width="16" height="11" fill="#00c000"/>
<rect x="901" y="675" width="16" height="11" fill="#c8c8c8"/>
<rect x="918" y="675" width="16" height="11" fill="#c8c8c8"/>
<rect x="935" y="675" width="16" height="11" fill="#00c000"/>
<rect x="954" y="675" width="16" height="11" fill="#c8c8c8"/>
<rect x="971" y="675" width="16" height="11" fill="#00c000"/>
<rect x="988" y="675" width="16" height="11" fill="#00c000"/>
<rect x="1005" y="675" width="16" height="11" fill="#00c000"/>
<rect x="1024" y="675" width="16" height="11" fill="#00c000"/>
<rect x="1041" y="675" width="16" height="11" fill="#00c000"/>
<rect x="1058" y="675" width="16" height="11" fill="#00c000"/>
<rect x="1075" y="675" width="16" height="11" fill="#c8c8c8"/>
<rect x="1094" y="675" width="16" height="11" fill="#00c000"/>
<rect x="1111" y="675" width="16" height="11" fill="#c8c8c8"/>
<rect x="1128" y="675" width="16" height="11" fill="#404040"/>
<rect x="1145" y="675" width="16" height="11" fill="#404040"/>
<rect x="1164" y="675" width="16" height="11" fill="#00c000"/>
<rect x="1181" y="675" width="16" height="11" fill="#c8c8c8"/>
<rect x="1198" y="675" width="16" height="11" fill="#404040"/>
<rect x="1215" y="675" width="16" height="11" fill="#00c000"/>
<rect x="1234" y="675" width="16" height="11" fill="#0000c0"/>
<rect x="1251" y="675" width="16" height="11" fill="#c8c8c8"/>
<rect x="1268" y="675" width="16" height="11" fill="#c8c8c8"/>
<rect x="1285" y="675" width="16" height="11" fill="#c8c8c8"/>
<rect x="1304" y="675" width="16" height="11" fill="#404040"/>
<rect x="1321" y="675" width="16" height="11" fill="#404040"/>
<rect x="1338" y="675" width="16" height="11" fill="#00c000"/>
</svg>
<div class="ab" style="left:0px;top:717px;width:1364px;height:18px;background:#f0f0f0"></div>
<svg class="ab" style="left:0;top:717px" width="1364" height="18" viewBox="0 717 1364 18" shape-rendering="crispEdges">
<rect x="0" y="717" width="1364" height="18" fill="#f0f0f0"/>
<text x="1" y="733" style="font-family:Liberation Sans;font-size:12px;fill:#000;letter-spacing:-0.4px">Ready</text>
<ellipse cx="26" cy="740" rx="9" ry="6.5" fill="#d8e0ec" stroke="#1a3a8a" stroke-width="1.5" shape-rendering="auto"/>
<rect x="838" y="720" width="105" height="15" fill="#f0f0f0"/><rect x="838" y="720" width="105" height="1" fill="#c8c8c8"/><rect x="838" y="720" width="1" height="15" fill="#c8c8c8"/><rect x="942" y="720" width="1" height="15" fill="#fff"/>
<rect x="945" y="720" width="63" height="15" fill="#f0f0f0"/><rect x="945" y="720" width="63" height="1" fill="#c8c8c8"/><rect x="945" y="720" width="1" height="15" fill="#c8c8c8"/><rect x="1007" y="720" width="1" height="15" fill="#fff"/>
<rect x="1010" y="720" width="10" height="15" fill="#f0f0f0"/><rect x="1010" y="720" width="10" height="1" fill="#c8c8c8"/><rect x="1010" y="720" width="1" height="15" fill="#c8c8c8"/><rect x="1019" y="720" width="1" height="15" fill="#fff"/>
<rect x="1022" y="720" width="139" height="15" fill="#f0f0f0"/><rect x="1022" y="720" width="139" height="1" fill="#c8c8c8"/><rect x="1022" y="720" width="1" height="15" fill="#c8c8c8"/><rect x="1160" y="720" width="1" height="15" fill="#fff"/>
<rect x="1163" y="720" width="60" height="15" fill="#f0f0f0"/><rect x="1163" y="720" width="60" height="1" fill="#c8c8c8"/><rect x="1163" y="720" width="1" height="15" fill="#c8c8c8"/><rect x="1222" y="720" width="1" height="15" fill="#fff"/>
<rect x="1226" y="720" width="54" height="15" fill="#f0f0f0"/><rect x="1226" y="720" width="54" height="1" fill="#c8c8c8"/><rect x="1226" y="720" width="1" height="15" fill="#c8c8c8"/><rect x="1279" y="720" width="1" height="15" fill="#fff"/>
<rect x="1283" y="720" width="55" height="15" fill="#f0f0f0"/><rect x="1283" y="720" width="55" height="1" fill="#c8c8c8"/><rect x="1283" y="720" width="1" height="15" fill="#c8c8c8"/><rect x="1337" y="720" width="1" height="15" fill="#fff"/>
<rect x="1341" y="720" width="23" height="15" fill="#f0f0f0"/><rect x="1341" y="720" width="23" height="1" fill="#c8c8c8"/><rect x="1341" y="720" width="1" height="15" fill="#c8c8c8"/><rect x="1363" y="720" width="1" height="15" fill="#fff"/>
<rect x="841" y="727" width="15" height="2" fill="#000"/><rect x="844" y="724" width="8" height="7" rx="1.5" fill="#00c000" stroke="#000"/>
<text x="860" y="733" style="font-family:Liberation Sans;font-size:12px;fill:#000;letter-spacing:-0.4px;letter-spacing:-0.55px">COM14 9600</text>
<text x="948" y="733" style="font-family:Liberation Sans;font-size:12px;fill:#000;letter-spacing:-0.4px;letter-spacing:0px">u-blox M8</text>
<rect x="1025" y="721" width="13" height="14" fill="#808000" stroke="#000"/><rect x="1028" y="721" width="7" height="5" fill="#c0c0c0"/><rect x="1028" y="729" width="7" height="6" fill="#000"/>
<svg x="1044" y="717" width="117" height="18"><text x="0" y="14.5" style="font-family:Liberation Sans;font-size:12px;fill:#000;letter-spacing:-0.75px">COM14_150202_054130</text></svg>
<text x="1166" y="733" style="font-family:Liberation Sans;font-size:12px;fill:#000;letter-spacing:-0.4px">NMEA</text>
<text x="1228" y="733" style="font-family:Liberation Sans;font-size:12px;fill:#000;letter-spacing:-0.4px;letter-spacing:-0.65px">10:10:55</text>
<text x="1285" y="733" style="font-family:Liberation Sans;font-size:12px;fill:#000;letter-spacing:-0.4px;letter-spacing:-0.7px">15:52:31</text>
<circle cx="1350.5" cy="728" r="4.5" fill="#ffff00" stroke="#b0b0a0" stroke-width="1.2" shape-rendering="auto"/>
</svg>
</div></body></html>
